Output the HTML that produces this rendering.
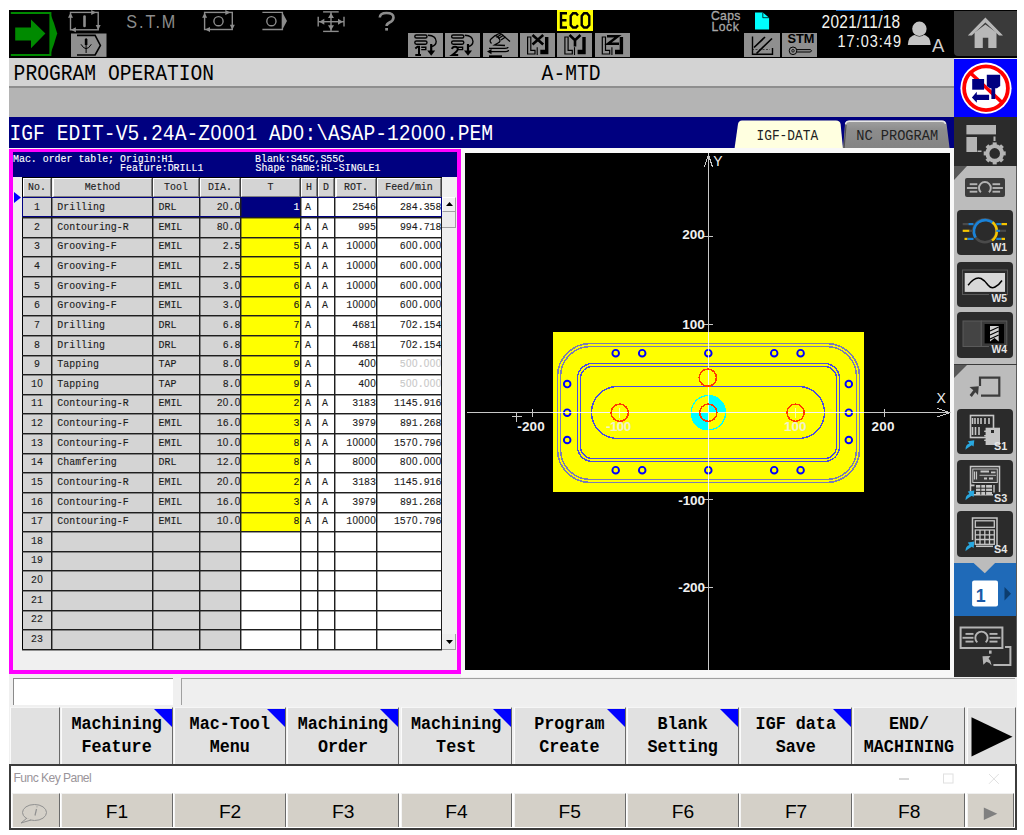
<!DOCTYPE html><html><head><meta charset="utf-8"><style>
*{margin:0;padding:0;box-sizing:border-box}
html,body{width:1024px;height:835px;overflow:hidden;background:#fff;position:relative;font-family:"Liberation Sans",sans-serif}
.ab{position:absolute}
.mono{font-family:"Liberation Mono",monospace}
.t{position:absolute;white-space:pre;line-height:1}
.z{font-family:"Liberation Sans",sans-serif;line-height:0}
.tb .t{-webkit-text-stroke:0.12px currentColor}
svg{position:absolute;overflow:visible}
</style></head><body>

<div class="ab" style="left:9px;top:10px;width:945px;height:48px;background:#000;"></div>
<div class="ab" style="left:9px;top:58px;width:945px;height:28px;background:#d3d3d3;"></div>
<div class="ab" style="left:9px;top:86px;width:945px;height:2px;background:#8e8e8e;"></div>
<div class="ab" style="left:9px;top:88px;width:945px;height:29px;background:#b4b4b4;"></div>
<div class="ab" style="left:9px;top:117px;width:945px;height:31px;background:#000080;"></div>
<div class="ab" style="left:9px;top:148px;width:945px;height:529px;background:#f0f0f0;"></div>
<div class="t mono" style="left:13.60px;top:65.07px;font-size:19.663px;color:#000;transform:scaleY(1.1041);transform-origin:0 0;">PROGRAM OPERATION</div>
<div class="t mono" style="left:541.60px;top:65.07px;font-size:19.663px;color:#000;transform:scaleY(1.1041);transform-origin:0 0;">A-MTD</div>
<div class="t mono" style="left:9.50px;top:124.22px;font-size:19.663px;color:#fff;transform:scaleY(1.1272);transform-origin:0 0;">IGF EDIT-V5.24A-Z<span class="z" style="letter-spacing:0.43px;margin-left:0.43px">0</span><span class="z" style="letter-spacing:0.43px;margin-left:0.43px">0</span><span class="z" style="letter-spacing:0.43px;margin-left:0.43px">0</span>1 AD<span class="z" style="letter-spacing:0.43px;margin-left:0.43px">0</span>:\ASAP-12<span class="z" style="letter-spacing:0.43px;margin-left:0.43px">0</span><span class="z" style="letter-spacing:0.43px;margin-left:0.43px">0</span><span class="z" style="letter-spacing:0.43px;margin-left:0.43px">0</span>.PEM</div>
<svg style="left:9px;top:10px;" width="52" height="48" viewBox="0 0 52 48"><path d="M1.8 3 H41.4 V45 H1.8" fill="none" stroke="#008a00" stroke-width="2"/><path d="M41 3 Q45 12 48.2 23.5 Q45 35 41 45 Z" fill="#008a00"/><path d="M6.2 17.6 H22 V9.5 L36.4 23.5 L22 38.2 V30.4 H6.2 Z" fill="#008a00"/></svg>
<svg style="left:0px;top:0px;" width="1024" height="60" viewBox="0 0 1024 60"><rect x="70.5" y="12.4" width="27.7" height="17.4" fill="none" stroke="#8c8c8c" stroke-width="1.4"/><path d="M91.2 9.9 L96.2 12.4 L91.2 14.9 Z" fill="#8c8c8c"/><path d="M68.0 17.7 L70.5 12.7 L73.0 17.7 Z" fill="#8c8c8c"/><path d="M95.7 25.0 L98.2 30.0 L100.7 25.0 Z" fill="#8c8c8c"/><path d="M75.9 27.3 L70.9 29.8 L75.9 32.3 Z" fill="#8c8c8c"/><line x1="84.5" y1="16.5" x2="84.5" y2="26" stroke="#8c8c8c" stroke-width="2.6" stroke-linecap="round"/><rect x="204.6" y="12.4" width="27.7" height="17.1" fill="none" stroke="#8c8c8c" stroke-width="1.4"/><path d="M225.3 9.9 L230.3 12.4 L225.3 14.9 Z" fill="#8c8c8c"/><path d="M202.1 17.7 L204.6 12.7 L207.1 17.7 Z" fill="#8c8c8c"/><path d="M229.8 24.7 L232.3 29.7 L234.8 24.7 Z" fill="#8c8c8c"/><path d="M210.0 27.0 L205.0 29.5 L210.0 32.0 Z" fill="#8c8c8c"/><circle cx="218.5" cy="21.2" r="4.6" fill="none" stroke="#8c8c8c" stroke-width="1.4"/><path d="M262.4 12.4 H282.4 V29.5 H262.4" fill="none" stroke="#8c8c8c" stroke-width="1.4"/><path d="M282 11.7 L287 21 L282 30.2 Z" fill="#8c8c8c"/><circle cx="271.4" cy="21.2" r="4.6" fill="none" stroke="#8c8c8c" stroke-width="1.4"/><g stroke="#8c8c8c" stroke-width="1.4" fill="none"><line x1="323.1" y1="11.9" x2="338.7" y2="11.9"/><line x1="323.1" y1="31.4" x2="338.7" y2="31.4"/><line x1="318.2" y1="16.8" x2="318.2" y2="26.6"/><line x1="344" y1="16.8" x2="344" y2="26.6"/><line x1="331" y1="12" x2="331" y2="31.3"/><line x1="318.3" y1="21.7" x2="344" y2="21.7"/></g><g fill="#8c8c8c"><path d="M331 13 L334 18 L328 18Z"/><path d="M331 30.3 L334 25.3 L328 25.3Z"/><path d="M319.3 21.7 L324.3 18.7 L324.3 24.7Z"/><path d="M343 21.7 L338 18.7 L338 24.7Z"/></g><path d="M379.8 17.5 Q380 13 386.5 13 Q393.5 13 393.5 17.5 Q393.5 20.5 389.5 22.5 Q386.6 24 386.6 26" fill="none" stroke="#8c8c8c" stroke-width="2.6"/><rect x="385.2" y="28" width="2.8" height="2.6" fill="#8c8c8c"/></svg>
<div class="t" style="left:126.30px;top:11.89px;font-size:16.200px;color:#8c8c8c;transform:scaleY(1.1700);transform-origin:0 0;letter-spacing:1.9px">S.T.M</div>
<svg style="left:71px;top:33px;" width="36" height="24" viewBox="0 0 36 24"><rect x="0" y="0.5" width="35.5" height="23.4" fill="#8f8f8f"/><path d="M6 2.4 H24.1 L29.4 12.4 L24.1 22 H6" fill="none" stroke="#000" stroke-width="1.6"/><line x1="15.1" y1="5" x2="15.1" y2="20" stroke="#000" stroke-width="1"/><rect x="13.8" y="6" width="2.6" height="6" fill="#000"/><path d="M10 11.3 Q15.1 20 20.3 11.3" fill="none" stroke="#000" stroke-width="1"/></svg>
<div class="ab" style="left:408px;top:33.4px;width:35px;height:23.6px;background:#8f8f8f;"></div>
<div class="ab" style="left:444.8px;top:33.4px;width:35.6px;height:23.6px;background:#8f8f8f;"></div>
<div class="ab" style="left:482.7px;top:33.4px;width:35px;height:23.6px;background:#8f8f8f;"></div>
<div class="ab" style="left:520px;top:33.4px;width:35px;height:23.6px;background:#8f8f8f;"></div>
<div class="ab" style="left:557.3px;top:33.4px;width:35px;height:23.6px;background:#8f8f8f;"></div>
<div class="ab" style="left:594.7px;top:33.4px;width:35px;height:23.6px;background:#8f8f8f;"></div>
<div class="ab" style="left:744.2px;top:33.4px;width:35.6px;height:23.6px;background:#8f8f8f;"></div>
<div class="ab" style="left:782.2px;top:33.4px;width:35px;height:23.6px;background:#8f8f8f;"></div>
<svg style="left:0px;top:0px;" width="1024" height="60" viewBox="0 0 1024 60"><g fill="none" stroke="#000" stroke-width="1.4"><rect x="414.8" y="35" width="12.2" height="3" rx="1.5"/><rect x="414.8" y="41" width="12.2" height="3.2" rx="1.6"/><path d="M428.0 35.3 Q436.0 35.6 436.2 41.5 Q436.0 45.5 431.5 46.5"/><path d="M421.2 47.3 H425.8 V49.6 H421.2"/></g><line x1="431.2" y1="44" x2="431.2" y2="52" stroke="#000" stroke-width="2.2"/><path d="M427.2 50.4 L431.2 55.8 L435.2 50.4Z" fill="#000"/><g fill="none" stroke="#000" stroke-width="1.4"><rect x="451.6" y="35" width="12.2" height="3" rx="1.5"/><rect x="451.6" y="41" width="12.2" height="3.2" rx="1.6"/><path d="M464.8 35.3 Q472.8 35.6 473.0 41.5 Q472.8 45.5 468.3 46.5"/><path d="M458.0 47.3 H462.6 V49.6 H458.0"/></g><line x1="468.0" y1="44" x2="468.0" y2="52" stroke="#000" stroke-width="2.2"/><path d="M464.0 50.4 L468.0 55.8 L472.0 50.4Z" fill="#000"/><path d="M415.3 48.5 L417.5 46.8 H419 V55.6 M415.3 55 H421" fill="none" stroke="#000" stroke-width="2"/><path d="M452 49 Q452.5 46.8 455 46.8 Q457.8 46.8 457.8 49 Q457.8 51 452.3 55 H458.2" fill="none" stroke="#000" stroke-width="2"/></svg>
<svg style="left:0px;top:0px;" width="1024" height="60" viewBox="0 0 1024 60"><g fill="none" stroke="#000" stroke-width="1.3"><path d="M491.5 43.5 Q489 41 491 39 L494.5 36 Q496 35 497.5 36.5 L499.5 39 Q501 41.5 498 43 L494.5 45 L505 45.5"/><path d="M494.5 36 L498.5 33.8 Q500.5 33.2 502 34.5 L510 41.5"/><path d="M496.5 37.5 L501 34.5 M498.5 38.5 L503.5 35.2 M501 40 L505.5 37"/><path d="M489 48.3 H505 Q508 48.3 508 47"/><path d="M490 51.6 H505.5 Q508.5 51.6 508.5 50"/></g><path d="M487 51.6 L491.5 49 V54.2Z" fill="#000"/><rect x="489" y="55.3" width="13" height="1.7" fill="#000"/></svg>
<svg style="left:0px;top:0px;" width="1024" height="60" viewBox="0 0 1024 60"><path d="M527.6 37 H530.8 V50.3 H535.0 V54 H527.6 Z" fill="none" stroke="#000" stroke-width="1.2"/><line x1="537.2" y1="47.2" x2="537.2" y2="55" stroke="#000" stroke-width="1.1"/><path d="M548.4 37 V54.2 H540.3 V49.8 H545.0 V37Z" fill="#000"/><path d="M564.9 37 H568.1 V50.3 H572.3 V54 H564.9 Z" fill="none" stroke="#000" stroke-width="1.2"/><line x1="574.5" y1="47.2" x2="574.5" y2="55" stroke="#000" stroke-width="1.1"/><path d="M585.7 37 V54.2 H577.6 V49.8 H582.3 V37Z" fill="#000"/><path d="M602.3 37 H605.5 V50.3 H609.7 V54 H602.3 Z" fill="none" stroke="#000" stroke-width="1.2"/><line x1="611.9" y1="47.2" x2="611.9" y2="55" stroke="#000" stroke-width="1.1"/><path d="M623.1 37 V54.2 H615.0 V49.8 H619.7 V37Z" fill="#000"/><path d="M532.5 35 L543.2 44.5 M543.2 35 L532.5 44.5" stroke="#000" stroke-width="2.6"/><path d="M569.5 35 L575 40.2 L580.5 35 M575 40.2 V46.5" fill="none" stroke="#000" stroke-width="2.6"/><path d="M607 36.3 H618 L608 43.7 H619" fill="none" stroke="#000" stroke-width="2.4"/></svg>
<div class="ab" style="left:557.3px;top:10px;width:35.7px;height:21px;background:#ffff00;"></div>
<svg style="left:0px;top:0px;" width="1024" height="60" viewBox="0 0 1024 60"><g fill="none" stroke="#000" stroke-width="2.4"><path d="M567 13.3 H561 V27.5 H567 M561 20.3 H566.5"/><path d="M578 15.5 L576 13.3 H573 L570.7 16 V25 L573 27.5 H576 L578 25.3"/><path d="M584 13.3 H587 L589.3 16 V25 L587 27.5 H584 L581.7 25 V16 Z"/></g></svg>
<div class="t" style="left:711.00px;top:9.56px;font-size:12.200px;color:#a8a8a8;letter-spacing:0.3px;-webkit-text-stroke:0.3px #a8a8a8">Caps</div>
<div class="t" style="left:711.50px;top:21.36px;font-size:12.200px;color:#a8a8a8;letter-spacing:0.5px;-webkit-text-stroke:0.3px #a8a8a8">Lock</div>
<svg style="left:0px;top:0px;" width="1024" height="60" viewBox="0 0 1024 60"><path d="M755 12.6 H762.8 L769.1 17.7 V29.6 H755Z" fill="#00ffff"/><path d="M762.8 12.6 V17.7 H769.1" fill="none" stroke="#000" stroke-width="0.8"/></svg>
<svg style="left:0px;top:0px;" width="1024" height="60" viewBox="0 0 1024 60"><path d="M752.5 36.5 V54.3 H772.5 V48" fill="none" stroke="#000" stroke-width="1.4"/><path d="M754 47.5 L765 37 M756.5 53.5 L772 38.5" stroke="#000" stroke-width="1.7"/><path d="M752 49.5 H770" stroke="#000" stroke-width="0.6" stroke-dasharray="2 1.5"/></svg>
<div class="t" style="left:787.40px;top:32.97px;font-size:12.800px;color:#000;font-weight:bold;">STM</div>
<svg style="left:0px;top:0px;" width="1024" height="60" viewBox="0 0 1024 60"><circle cx="793" cy="50.8" r="3.8" fill="none" stroke="#000" stroke-width="1"/><circle cx="793" cy="50.8" r="1.3" fill="none" stroke="#000" stroke-width="0.8"/><path d="M796.8 49.6 H810.5 M796.8 52 H810.5 L811.5 50.8 L810.5 49.6" fill="none" stroke="#000" stroke-width="1"/></svg>
<div class="t" style="left:821.60px;top:13.36px;font-size:15.400px;color:#f4f4f0;transform:scaleY(1.1600);transform-origin:0 0;letter-spacing:0.3px">2021/11/18</div>
<div class="t" style="left:837.50px;top:33.28px;font-size:14.500px;color:#f4f4f0;transform:scaleY(1.1400);transform-origin:0 0;letter-spacing:1.0px">17:03:49</div>
<div class="ab" style="left:836px;top:9.5px;width:47px;height:1.2px;background:#1e6ec8;"></div>
<svg style="left:0px;top:0px;" width="1024" height="60" viewBox="0 0 1024 60"><path d="M907.8 44.9 Q908.3 35.2 916.5 34.4 H922.3 Q930.3 35.2 930.7 44.9Z" fill="#c4c4c4"/><circle cx="919.4" cy="28.8" r="7.6" fill="#000"/><circle cx="919.4" cy="28.8" r="7.2" fill="#c4c4c4"/></svg>
<div class="t" style="left:931.90px;top:36.66px;font-size:18.500px;color:#d0d0d0;">A</div>
<svg style="left:0px;top:0px;" width="1024" height="160" viewBox="0 0 1024 160"><path d="M734.5 148.7 L738 124 Q738.7 120.5 742 120.5 H836 Q840 120.5 840.6 124 L843 148.7Z" fill="#ffffe0"/><defs><linearGradient id="ncg" x1="0" y1="0" x2="0" y2="1"><stop offset="0" stop-color="#a0a0a0"/><stop offset="0.35" stop-color="#8c8c8c"/><stop offset="1" stop-color="#848484"/></linearGradient></defs><path d="M843 148.7 L845 124.5 Q845.6 120.5 849.5 120.5 H942 Q946 120.5 946.6 124.5 L949.7 148.7Z" fill="url(#ncg)"/><path d="M844 148.7 L846 125" fill="none" stroke="#505050" stroke-width="1.2"/><path d="M845.5 124 Q846 121.2 849.5 121.2 H942 Q945 121.2 945.5 124" fill="none" stroke="#e8e8e8" stroke-width="1.4"/></svg>
<div class="t mono" style="left:756.50px;top:128.67px;font-size:12.831px;color:#222;transform:scaleY(1.1832);transform-origin:0 0;">IGF-DATA</div>
<div class="t mono" style="left:856.20px;top:128.97px;font-size:13.664px;color:#222;transform:scaleY(1.1110);transform-origin:0 0;">NC PROGRAM</div>
<div class="tb">
<div class="ab" style="left:9px;top:149px;width:452px;height:525px;border:4px solid #ff00ff;background:#f0f0f0"></div>
<div class="ab" style="left:13px;top:152px;width:444px;height:25px;background:#000080;"></div>
<div class="t mono" style="left:13.00px;top:153.66px;font-size:9.915px;color:#fff;transform:scaleY(1.0718);transform-origin:0 0;">Mac. order table; Origin:H1</div>
<div class="t mono" style="left:120.10px;top:163.46px;font-size:9.915px;color:#fff;transform:scaleY(1.0718);transform-origin:0 0;">Feature:DRILL1</div>
<div class="t mono" style="left:255.00px;top:153.86px;font-size:9.915px;color:#fff;transform:scaleY(1.0718);transform-origin:0 0;">Blank:S45C,S55C</div>
<div class="t mono" style="left:255.60px;top:163.06px;font-size:9.915px;color:#fff;transform:scaleY(1.0718);transform-origin:0 0;">Shape name:HL-SINGLE1</div>
<div class="ab" style="left:22px;top:177px;width:420px;height:1px;background:#000;"></div>
<div class="ab" style="left:22px;top:177px;width:1px;height:473px;background:#000;"></div>
<div class="ab" style="left:23px;top:178px;width:28px;height:19px;background:#d4d4d4;border-top:1px solid #fff;border-left:1px solid #fff;border-right:1px solid #808080;border-bottom:1px solid #808080"></div>
<div class="t mono" style="left:28.07px;top:182.06px;font-size:9.915px;color:#222;transform:scaleY(1.0718);transform-origin:0 0;">No.</div>
<div class="ab" style="left:53px;top:178px;width:99px;height:19px;background:#d4d4d4;border-top:1px solid #fff;border-left:1px solid #fff;border-right:1px solid #808080;border-bottom:1px solid #808080"></div>
<div class="t mono" style="left:84.65px;top:182.06px;font-size:9.915px;color:#222;transform:scaleY(1.0718);transform-origin:0 0;">Method</div>
<div class="ab" style="left:153px;top:178px;width:46px;height:19px;background:#d4d4d4;border-top:1px solid #fff;border-left:1px solid #fff;border-right:1px solid #808080;border-bottom:1px solid #808080"></div>
<div class="t mono" style="left:164.10px;top:182.06px;font-size:9.915px;color:#222;transform:scaleY(1.0718);transform-origin:0 0;">Tool</div>
<div class="ab" style="left:200px;top:178px;width:40px;height:19px;background:#d4d4d4;border-top:1px solid #fff;border-left:1px solid #fff;border-right:1px solid #808080;border-bottom:1px solid #808080"></div>
<div class="t mono" style="left:208.10px;top:182.06px;font-size:9.915px;color:#222;transform:scaleY(1.0718);transform-origin:0 0;">DIA.</div>
<div class="ab" style="left:241px;top:178px;width:59px;height:19px;background:#d4d4d4;border-top:1px solid #fff;border-left:1px solid #fff;border-right:1px solid #808080;border-bottom:1px solid #808080"></div>
<div class="t mono" style="left:267.52px;top:182.06px;font-size:9.915px;color:#222;transform:scaleY(1.0718);transform-origin:0 0;">T</div>
<div class="ab" style="left:301px;top:178px;width:16px;height:19px;background:#d4d4d4;border-top:1px solid #fff;border-left:1px solid #fff;border-right:1px solid #808080;border-bottom:1px solid #808080"></div>
<div class="t mono" style="left:306.02px;top:182.06px;font-size:9.915px;color:#222;transform:scaleY(1.0718);transform-origin:0 0;">H</div>
<div class="ab" style="left:318px;top:178px;width:16px;height:19px;background:#d4d4d4;border-top:1px solid #fff;border-left:1px solid #fff;border-right:1px solid #808080;border-bottom:1px solid #808080"></div>
<div class="t mono" style="left:323.02px;top:182.06px;font-size:9.915px;color:#222;transform:scaleY(1.0718);transform-origin:0 0;">D</div>
<div class="ab" style="left:336px;top:178px;width:40px;height:19px;background:#d4d4d4;border-top:1px solid #fff;border-left:1px solid #fff;border-right:1px solid #808080;border-bottom:1px solid #808080"></div>
<div class="t mono" style="left:344.10px;top:182.06px;font-size:9.915px;color:#222;transform:scaleY(1.0718);transform-origin:0 0;">ROT.</div>
<div class="ab" style="left:377px;top:178px;width:64px;height:19px;background:#d4d4d4;border-top:1px solid #fff;border-left:1px solid #fff;border-right:1px solid #808080;border-bottom:1px solid #808080"></div>
<div class="t mono" style="left:385.20px;top:182.06px;font-size:9.915px;color:#222;transform:scaleY(1.0718);transform-origin:0 0;">Feed/min</div>
<div class="ab" style="left:51px;top:178px;width:1px;height:19px;background:#404040;"></div>
<div class="ab" style="left:152px;top:178px;width:1px;height:19px;background:#404040;"></div>
<div class="ab" style="left:199px;top:178px;width:1px;height:19px;background:#404040;"></div>
<div class="ab" style="left:240px;top:178px;width:1px;height:19px;background:#404040;"></div>
<div class="ab" style="left:300px;top:178px;width:1px;height:19px;background:#404040;"></div>
<div class="ab" style="left:317px;top:178px;width:1px;height:19px;background:#404040;"></div>
<div class="ab" style="left:334px;top:178px;width:1px;height:19px;background:#404040;"></div>
<div class="ab" style="left:376px;top:178px;width:1px;height:19px;background:#404040;"></div>
<div class="ab" style="left:441px;top:178px;width:1px;height:19px;background:#404040;"></div>
<div class="ab" style="left:23px;top:198px;width:218px;height:19px;background:#d4d4d4;"></div>
<div class="ab" style="left:241px;top:198px;width:200px;height:19px;background:#fff;"></div>
<div class="ab" style="left:241px;top:198px;width:59px;height:19px;background:#000080;"></div>
<div class="t mono" style="left:34.02px;top:202.13px;font-size:9.915px;color:#1c1c1c;transform:scaleY(1.1024);transform-origin:0 0;">1</div>
<div class="t mono" style="left:57.30px;top:202.13px;font-size:9.915px;color:#1c1c1c;transform:scaleY(1.1024);transform-origin:0 0;">Drilling</div>
<div class="t mono" style="left:158.50px;top:202.13px;font-size:9.915px;color:#1c1c1c;transform:scaleY(1.1024);transform-origin:0 0;">DRL</div>
<div class="t mono" style="right:783.50px;top:202.13px;font-size:9.915px;color:#1c1c1c;transform:scaleY(1.1024);transform-origin:0 0;">2<span class="z" style="letter-spacing:0.22px;margin-left:0.22px">0</span>.<span class="z" style="letter-spacing:0.22px;margin-left:0.22px">0</span></div>
<div class="t mono" style="right:724.50px;top:202.13px;font-size:9.915px;color:#fff;transform:scaleY(1.1024);transform-origin:0 0;">1</div>
<div class="t mono" style="left:305.00px;top:202.13px;font-size:9.915px;color:#1c1c1c;transform:scaleY(1.1024);transform-origin:0 0;">A</div>
<div class="t mono" style="right:648.00px;top:202.13px;font-size:9.915px;color:#1c1c1c;transform:scaleY(1.1024);transform-origin:0 0;">2546</div>
<div class="t mono" style="right:582.50px;top:202.13px;font-size:9.915px;color:#1c1c1c;transform:scaleY(1.1024);transform-origin:0 0;">284.358</div>
<div class="ab" style="left:23px;top:217px;width:218px;height:20px;background:#d4d4d4;"></div>
<div class="ab" style="left:241px;top:217px;width:200px;height:20px;background:#fff;"></div>
<div class="ab" style="left:241px;top:217px;width:59px;height:20px;background:#ffff00;"></div>
<div class="t mono" style="left:34.02px;top:221.76px;font-size:9.915px;color:#1c1c1c;transform:scaleY(1.1024);transform-origin:0 0;">2</div>
<div class="t mono" style="left:57.30px;top:221.76px;font-size:9.915px;color:#1c1c1c;transform:scaleY(1.1024);transform-origin:0 0;">Contouring-R</div>
<div class="t mono" style="left:158.50px;top:221.76px;font-size:9.915px;color:#1c1c1c;transform:scaleY(1.1024);transform-origin:0 0;">EMIL</div>
<div class="t mono" style="right:783.50px;top:221.76px;font-size:9.915px;color:#1c1c1c;transform:scaleY(1.1024);transform-origin:0 0;">8<span class="z" style="letter-spacing:0.22px;margin-left:0.22px">0</span>.<span class="z" style="letter-spacing:0.22px;margin-left:0.22px">0</span></div>
<div class="t mono" style="right:724.50px;top:221.76px;font-size:9.915px;color:#1c1c1c;transform:scaleY(1.1024);transform-origin:0 0;">4</div>
<div class="t mono" style="left:305.00px;top:221.76px;font-size:9.915px;color:#1c1c1c;transform:scaleY(1.1024);transform-origin:0 0;">A</div>
<div class="t mono" style="left:322.00px;top:221.76px;font-size:9.915px;color:#1c1c1c;transform:scaleY(1.1024);transform-origin:0 0;">A</div>
<div class="t mono" style="right:648.00px;top:221.76px;font-size:9.915px;color:#1c1c1c;transform:scaleY(1.1024);transform-origin:0 0;">995</div>
<div class="t mono" style="right:582.50px;top:221.76px;font-size:9.915px;color:#1c1c1c;transform:scaleY(1.1024);transform-origin:0 0;">994.718</div>
<div class="ab" style="left:23px;top:237px;width:218px;height:19px;background:#d4d4d4;"></div>
<div class="ab" style="left:241px;top:237px;width:200px;height:19px;background:#fff;"></div>
<div class="ab" style="left:241px;top:237px;width:59px;height:19px;background:#ffff00;"></div>
<div class="t mono" style="left:34.02px;top:241.39px;font-size:9.915px;color:#1c1c1c;transform:scaleY(1.1024);transform-origin:0 0;">3</div>
<div class="t mono" style="left:57.30px;top:241.39px;font-size:9.915px;color:#1c1c1c;transform:scaleY(1.1024);transform-origin:0 0;">Grooving-F</div>
<div class="t mono" style="left:158.50px;top:241.39px;font-size:9.915px;color:#1c1c1c;transform:scaleY(1.1024);transform-origin:0 0;">EMIL</div>
<div class="t mono" style="right:783.50px;top:241.39px;font-size:9.915px;color:#1c1c1c;transform:scaleY(1.1024);transform-origin:0 0;">2.5</div>
<div class="t mono" style="right:724.50px;top:241.39px;font-size:9.915px;color:#1c1c1c;transform:scaleY(1.1024);transform-origin:0 0;">5</div>
<div class="t mono" style="left:305.00px;top:241.39px;font-size:9.915px;color:#1c1c1c;transform:scaleY(1.1024);transform-origin:0 0;">A</div>
<div class="t mono" style="left:322.00px;top:241.39px;font-size:9.915px;color:#1c1c1c;transform:scaleY(1.1024);transform-origin:0 0;">A</div>
<div class="t mono" style="right:648.00px;top:241.39px;font-size:9.915px;color:#1c1c1c;transform:scaleY(1.1024);transform-origin:0 0;">1<span class="z" style="letter-spacing:0.22px;margin-left:0.22px">0</span><span class="z" style="letter-spacing:0.22px;margin-left:0.22px">0</span><span class="z" style="letter-spacing:0.22px;margin-left:0.22px">0</span><span class="z" style="letter-spacing:0.22px;margin-left:0.22px">0</span></div>
<div class="t mono" style="right:582.50px;top:241.39px;font-size:9.915px;color:#1c1c1c;transform:scaleY(1.1024);transform-origin:0 0;">6<span class="z" style="letter-spacing:0.22px;margin-left:0.22px">0</span><span class="z" style="letter-spacing:0.22px;margin-left:0.22px">0</span>.<span class="z" style="letter-spacing:0.22px;margin-left:0.22px">0</span><span class="z" style="letter-spacing:0.22px;margin-left:0.22px">0</span><span class="z" style="letter-spacing:0.22px;margin-left:0.22px">0</span></div>
<div class="ab" style="left:23px;top:256px;width:218px;height:20px;background:#d4d4d4;"></div>
<div class="ab" style="left:241px;top:256px;width:200px;height:20px;background:#fff;"></div>
<div class="ab" style="left:241px;top:256px;width:59px;height:20px;background:#ffff00;"></div>
<div class="t mono" style="left:34.02px;top:261.02px;font-size:9.915px;color:#1c1c1c;transform:scaleY(1.1024);transform-origin:0 0;">4</div>
<div class="t mono" style="left:57.30px;top:261.02px;font-size:9.915px;color:#1c1c1c;transform:scaleY(1.1024);transform-origin:0 0;">Grooving-F</div>
<div class="t mono" style="left:158.50px;top:261.02px;font-size:9.915px;color:#1c1c1c;transform:scaleY(1.1024);transform-origin:0 0;">EMIL</div>
<div class="t mono" style="right:783.50px;top:261.02px;font-size:9.915px;color:#1c1c1c;transform:scaleY(1.1024);transform-origin:0 0;">2.5</div>
<div class="t mono" style="right:724.50px;top:261.02px;font-size:9.915px;color:#1c1c1c;transform:scaleY(1.1024);transform-origin:0 0;">5</div>
<div class="t mono" style="left:305.00px;top:261.02px;font-size:9.915px;color:#1c1c1c;transform:scaleY(1.1024);transform-origin:0 0;">A</div>
<div class="t mono" style="left:322.00px;top:261.02px;font-size:9.915px;color:#1c1c1c;transform:scaleY(1.1024);transform-origin:0 0;">A</div>
<div class="t mono" style="right:648.00px;top:261.02px;font-size:9.915px;color:#1c1c1c;transform:scaleY(1.1024);transform-origin:0 0;">1<span class="z" style="letter-spacing:0.22px;margin-left:0.22px">0</span><span class="z" style="letter-spacing:0.22px;margin-left:0.22px">0</span><span class="z" style="letter-spacing:0.22px;margin-left:0.22px">0</span><span class="z" style="letter-spacing:0.22px;margin-left:0.22px">0</span></div>
<div class="t mono" style="right:582.50px;top:261.02px;font-size:9.915px;color:#1c1c1c;transform:scaleY(1.1024);transform-origin:0 0;">6<span class="z" style="letter-spacing:0.22px;margin-left:0.22px">0</span><span class="z" style="letter-spacing:0.22px;margin-left:0.22px">0</span>.<span class="z" style="letter-spacing:0.22px;margin-left:0.22px">0</span><span class="z" style="letter-spacing:0.22px;margin-left:0.22px">0</span><span class="z" style="letter-spacing:0.22px;margin-left:0.22px">0</span></div>
<div class="ab" style="left:23px;top:276px;width:218px;height:20px;background:#d4d4d4;"></div>
<div class="ab" style="left:241px;top:276px;width:200px;height:20px;background:#fff;"></div>
<div class="ab" style="left:241px;top:276px;width:59px;height:20px;background:#ffff00;"></div>
<div class="t mono" style="left:34.02px;top:280.65px;font-size:9.915px;color:#1c1c1c;transform:scaleY(1.1024);transform-origin:0 0;">5</div>
<div class="t mono" style="left:57.30px;top:280.65px;font-size:9.915px;color:#1c1c1c;transform:scaleY(1.1024);transform-origin:0 0;">Grooving-F</div>
<div class="t mono" style="left:158.50px;top:280.65px;font-size:9.915px;color:#1c1c1c;transform:scaleY(1.1024);transform-origin:0 0;">EMIL</div>
<div class="t mono" style="right:783.50px;top:280.65px;font-size:9.915px;color:#1c1c1c;transform:scaleY(1.1024);transform-origin:0 0;">3.<span class="z" style="letter-spacing:0.22px;margin-left:0.22px">0</span></div>
<div class="t mono" style="right:724.50px;top:280.65px;font-size:9.915px;color:#1c1c1c;transform:scaleY(1.1024);transform-origin:0 0;">6</div>
<div class="t mono" style="left:305.00px;top:280.65px;font-size:9.915px;color:#1c1c1c;transform:scaleY(1.1024);transform-origin:0 0;">A</div>
<div class="t mono" style="left:322.00px;top:280.65px;font-size:9.915px;color:#1c1c1c;transform:scaleY(1.1024);transform-origin:0 0;">A</div>
<div class="t mono" style="right:648.00px;top:280.65px;font-size:9.915px;color:#1c1c1c;transform:scaleY(1.1024);transform-origin:0 0;">1<span class="z" style="letter-spacing:0.22px;margin-left:0.22px">0</span><span class="z" style="letter-spacing:0.22px;margin-left:0.22px">0</span><span class="z" style="letter-spacing:0.22px;margin-left:0.22px">0</span><span class="z" style="letter-spacing:0.22px;margin-left:0.22px">0</span></div>
<div class="t mono" style="right:582.50px;top:280.65px;font-size:9.915px;color:#1c1c1c;transform:scaleY(1.1024);transform-origin:0 0;">6<span class="z" style="letter-spacing:0.22px;margin-left:0.22px">0</span><span class="z" style="letter-spacing:0.22px;margin-left:0.22px">0</span>.<span class="z" style="letter-spacing:0.22px;margin-left:0.22px">0</span><span class="z" style="letter-spacing:0.22px;margin-left:0.22px">0</span><span class="z" style="letter-spacing:0.22px;margin-left:0.22px">0</span></div>
<div class="ab" style="left:23px;top:296px;width:218px;height:19px;background:#d4d4d4;"></div>
<div class="ab" style="left:241px;top:296px;width:200px;height:19px;background:#fff;"></div>
<div class="ab" style="left:241px;top:296px;width:59px;height:19px;background:#ffff00;"></div>
<div class="t mono" style="left:34.02px;top:300.28px;font-size:9.915px;color:#1c1c1c;transform:scaleY(1.1024);transform-origin:0 0;">6</div>
<div class="t mono" style="left:57.30px;top:300.28px;font-size:9.915px;color:#1c1c1c;transform:scaleY(1.1024);transform-origin:0 0;">Grooving-F</div>
<div class="t mono" style="left:158.50px;top:300.28px;font-size:9.915px;color:#1c1c1c;transform:scaleY(1.1024);transform-origin:0 0;">EMIL</div>
<div class="t mono" style="right:783.50px;top:300.28px;font-size:9.915px;color:#1c1c1c;transform:scaleY(1.1024);transform-origin:0 0;">3.<span class="z" style="letter-spacing:0.22px;margin-left:0.22px">0</span></div>
<div class="t mono" style="right:724.50px;top:300.28px;font-size:9.915px;color:#1c1c1c;transform:scaleY(1.1024);transform-origin:0 0;">6</div>
<div class="t mono" style="left:305.00px;top:300.28px;font-size:9.915px;color:#1c1c1c;transform:scaleY(1.1024);transform-origin:0 0;">A</div>
<div class="t mono" style="left:322.00px;top:300.28px;font-size:9.915px;color:#1c1c1c;transform:scaleY(1.1024);transform-origin:0 0;">A</div>
<div class="t mono" style="right:648.00px;top:300.28px;font-size:9.915px;color:#1c1c1c;transform:scaleY(1.1024);transform-origin:0 0;">1<span class="z" style="letter-spacing:0.22px;margin-left:0.22px">0</span><span class="z" style="letter-spacing:0.22px;margin-left:0.22px">0</span><span class="z" style="letter-spacing:0.22px;margin-left:0.22px">0</span><span class="z" style="letter-spacing:0.22px;margin-left:0.22px">0</span></div>
<div class="t mono" style="right:582.50px;top:300.28px;font-size:9.915px;color:#1c1c1c;transform:scaleY(1.1024);transform-origin:0 0;">6<span class="z" style="letter-spacing:0.22px;margin-left:0.22px">0</span><span class="z" style="letter-spacing:0.22px;margin-left:0.22px">0</span>.<span class="z" style="letter-spacing:0.22px;margin-left:0.22px">0</span><span class="z" style="letter-spacing:0.22px;margin-left:0.22px">0</span><span class="z" style="letter-spacing:0.22px;margin-left:0.22px">0</span></div>
<div class="ab" style="left:23px;top:315px;width:218px;height:20px;background:#d4d4d4;"></div>
<div class="ab" style="left:241px;top:315px;width:200px;height:20px;background:#fff;"></div>
<div class="ab" style="left:241px;top:315px;width:59px;height:20px;background:#ffff00;"></div>
<div class="t mono" style="left:34.02px;top:319.91px;font-size:9.915px;color:#1c1c1c;transform:scaleY(1.1024);transform-origin:0 0;">7</div>
<div class="t mono" style="left:57.30px;top:319.91px;font-size:9.915px;color:#1c1c1c;transform:scaleY(1.1024);transform-origin:0 0;">Drilling</div>
<div class="t mono" style="left:158.50px;top:319.91px;font-size:9.915px;color:#1c1c1c;transform:scaleY(1.1024);transform-origin:0 0;">DRL</div>
<div class="t mono" style="right:783.50px;top:319.91px;font-size:9.915px;color:#1c1c1c;transform:scaleY(1.1024);transform-origin:0 0;">6.8</div>
<div class="t mono" style="right:724.50px;top:319.91px;font-size:9.915px;color:#1c1c1c;transform:scaleY(1.1024);transform-origin:0 0;">7</div>
<div class="t mono" style="left:305.00px;top:319.91px;font-size:9.915px;color:#1c1c1c;transform:scaleY(1.1024);transform-origin:0 0;">A</div>
<div class="t mono" style="right:648.00px;top:319.91px;font-size:9.915px;color:#1c1c1c;transform:scaleY(1.1024);transform-origin:0 0;">4681</div>
<div class="t mono" style="right:582.50px;top:319.91px;font-size:9.915px;color:#1c1c1c;transform:scaleY(1.1024);transform-origin:0 0;">7<span class="z" style="letter-spacing:0.22px;margin-left:0.22px">0</span>2.154</div>
<div class="ab" style="left:23px;top:335px;width:218px;height:20px;background:#d4d4d4;"></div>
<div class="ab" style="left:241px;top:335px;width:200px;height:20px;background:#fff;"></div>
<div class="ab" style="left:241px;top:335px;width:59px;height:20px;background:#ffff00;"></div>
<div class="t mono" style="left:34.02px;top:339.54px;font-size:9.915px;color:#1c1c1c;transform:scaleY(1.1024);transform-origin:0 0;">8</div>
<div class="t mono" style="left:57.30px;top:339.54px;font-size:9.915px;color:#1c1c1c;transform:scaleY(1.1024);transform-origin:0 0;">Drilling</div>
<div class="t mono" style="left:158.50px;top:339.54px;font-size:9.915px;color:#1c1c1c;transform:scaleY(1.1024);transform-origin:0 0;">DRL</div>
<div class="t mono" style="right:783.50px;top:339.54px;font-size:9.915px;color:#1c1c1c;transform:scaleY(1.1024);transform-origin:0 0;">6.8</div>
<div class="t mono" style="right:724.50px;top:339.54px;font-size:9.915px;color:#1c1c1c;transform:scaleY(1.1024);transform-origin:0 0;">7</div>
<div class="t mono" style="left:305.00px;top:339.54px;font-size:9.915px;color:#1c1c1c;transform:scaleY(1.1024);transform-origin:0 0;">A</div>
<div class="t mono" style="right:648.00px;top:339.54px;font-size:9.915px;color:#1c1c1c;transform:scaleY(1.1024);transform-origin:0 0;">4681</div>
<div class="t mono" style="right:582.50px;top:339.54px;font-size:9.915px;color:#1c1c1c;transform:scaleY(1.1024);transform-origin:0 0;">7<span class="z" style="letter-spacing:0.22px;margin-left:0.22px">0</span>2.154</div>
<div class="ab" style="left:23px;top:355px;width:218px;height:19px;background:#d4d4d4;"></div>
<div class="ab" style="left:241px;top:355px;width:200px;height:19px;background:#fff;"></div>
<div class="ab" style="left:241px;top:355px;width:59px;height:19px;background:#ffff00;"></div>
<div class="t mono" style="left:34.02px;top:359.17px;font-size:9.915px;color:#1c1c1c;transform:scaleY(1.1024);transform-origin:0 0;">9</div>
<div class="t mono" style="left:57.30px;top:359.17px;font-size:9.915px;color:#1c1c1c;transform:scaleY(1.1024);transform-origin:0 0;">Tapping</div>
<div class="t mono" style="left:158.50px;top:359.17px;font-size:9.915px;color:#1c1c1c;transform:scaleY(1.1024);transform-origin:0 0;">TAP</div>
<div class="t mono" style="right:783.50px;top:359.17px;font-size:9.915px;color:#1c1c1c;transform:scaleY(1.1024);transform-origin:0 0;">8.<span class="z" style="letter-spacing:0.22px;margin-left:0.22px">0</span></div>
<div class="t mono" style="right:724.50px;top:359.17px;font-size:9.915px;color:#1c1c1c;transform:scaleY(1.1024);transform-origin:0 0;">9</div>
<div class="t mono" style="left:305.00px;top:359.17px;font-size:9.915px;color:#1c1c1c;transform:scaleY(1.1024);transform-origin:0 0;">A</div>
<div class="t mono" style="right:648.00px;top:359.17px;font-size:9.915px;color:#1c1c1c;transform:scaleY(1.1024);transform-origin:0 0;">4<span class="z" style="letter-spacing:0.22px;margin-left:0.22px">0</span><span class="z" style="letter-spacing:0.22px;margin-left:0.22px">0</span></div>
<div class="t mono" style="right:582.50px;top:359.17px;font-size:9.915px;color:#c8c8c8;transform:scaleY(1.1024);transform-origin:0 0;">5<span class="z" style="letter-spacing:0.22px;margin-left:0.22px">0</span><span class="z" style="letter-spacing:0.22px;margin-left:0.22px">0</span>.<span class="z" style="letter-spacing:0.22px;margin-left:0.22px">0</span><span class="z" style="letter-spacing:0.22px;margin-left:0.22px">0</span><span class="z" style="letter-spacing:0.22px;margin-left:0.22px">0</span></div>
<div class="ab" style="left:23px;top:374px;width:218px;height:20px;background:#d4d4d4;"></div>
<div class="ab" style="left:241px;top:374px;width:200px;height:20px;background:#fff;"></div>
<div class="ab" style="left:241px;top:374px;width:59px;height:20px;background:#ffff00;"></div>
<div class="t mono" style="left:31.05px;top:378.80px;font-size:9.915px;color:#1c1c1c;transform:scaleY(1.1024);transform-origin:0 0;">1<span class="z" style="letter-spacing:0.22px;margin-left:0.22px">0</span></div>
<div class="t mono" style="left:57.30px;top:378.80px;font-size:9.915px;color:#1c1c1c;transform:scaleY(1.1024);transform-origin:0 0;">Tapping</div>
<div class="t mono" style="left:158.50px;top:378.80px;font-size:9.915px;color:#1c1c1c;transform:scaleY(1.1024);transform-origin:0 0;">TAP</div>
<div class="t mono" style="right:783.50px;top:378.80px;font-size:9.915px;color:#1c1c1c;transform:scaleY(1.1024);transform-origin:0 0;">8.<span class="z" style="letter-spacing:0.22px;margin-left:0.22px">0</span></div>
<div class="t mono" style="right:724.50px;top:378.80px;font-size:9.915px;color:#1c1c1c;transform:scaleY(1.1024);transform-origin:0 0;">9</div>
<div class="t mono" style="left:305.00px;top:378.80px;font-size:9.915px;color:#1c1c1c;transform:scaleY(1.1024);transform-origin:0 0;">A</div>
<div class="t mono" style="right:648.00px;top:378.80px;font-size:9.915px;color:#1c1c1c;transform:scaleY(1.1024);transform-origin:0 0;">4<span class="z" style="letter-spacing:0.22px;margin-left:0.22px">0</span><span class="z" style="letter-spacing:0.22px;margin-left:0.22px">0</span></div>
<div class="t mono" style="right:582.50px;top:378.80px;font-size:9.915px;color:#c8c8c8;transform:scaleY(1.1024);transform-origin:0 0;">5<span class="z" style="letter-spacing:0.22px;margin-left:0.22px">0</span><span class="z" style="letter-spacing:0.22px;margin-left:0.22px">0</span>.<span class="z" style="letter-spacing:0.22px;margin-left:0.22px">0</span><span class="z" style="letter-spacing:0.22px;margin-left:0.22px">0</span><span class="z" style="letter-spacing:0.22px;margin-left:0.22px">0</span></div>
<div class="ab" style="left:23px;top:394px;width:218px;height:19px;background:#d4d4d4;"></div>
<div class="ab" style="left:241px;top:394px;width:200px;height:19px;background:#fff;"></div>
<div class="ab" style="left:241px;top:394px;width:59px;height:19px;background:#ffff00;"></div>
<div class="t mono" style="left:31.05px;top:398.43px;font-size:9.915px;color:#1c1c1c;transform:scaleY(1.1024);transform-origin:0 0;">11</div>
<div class="t mono" style="left:57.30px;top:398.43px;font-size:9.915px;color:#1c1c1c;transform:scaleY(1.1024);transform-origin:0 0;">Contouring-R</div>
<div class="t mono" style="left:158.50px;top:398.43px;font-size:9.915px;color:#1c1c1c;transform:scaleY(1.1024);transform-origin:0 0;">EMIL</div>
<div class="t mono" style="right:783.50px;top:398.43px;font-size:9.915px;color:#1c1c1c;transform:scaleY(1.1024);transform-origin:0 0;">2<span class="z" style="letter-spacing:0.22px;margin-left:0.22px">0</span>.<span class="z" style="letter-spacing:0.22px;margin-left:0.22px">0</span></div>
<div class="t mono" style="right:724.50px;top:398.43px;font-size:9.915px;color:#1c1c1c;transform:scaleY(1.1024);transform-origin:0 0;">2</div>
<div class="t mono" style="left:305.00px;top:398.43px;font-size:9.915px;color:#1c1c1c;transform:scaleY(1.1024);transform-origin:0 0;">A</div>
<div class="t mono" style="left:322.00px;top:398.43px;font-size:9.915px;color:#1c1c1c;transform:scaleY(1.1024);transform-origin:0 0;">A</div>
<div class="t mono" style="right:648.00px;top:398.43px;font-size:9.915px;color:#1c1c1c;transform:scaleY(1.1024);transform-origin:0 0;">3183</div>
<div class="t mono" style="right:582.50px;top:398.43px;font-size:9.915px;color:#1c1c1c;transform:scaleY(1.1024);transform-origin:0 0;">1145.916</div>
<div class="ab" style="left:23px;top:413px;width:218px;height:20px;background:#d4d4d4;"></div>
<div class="ab" style="left:241px;top:413px;width:200px;height:20px;background:#fff;"></div>
<div class="ab" style="left:241px;top:413px;width:59px;height:20px;background:#ffff00;"></div>
<div class="t mono" style="left:31.05px;top:418.06px;font-size:9.915px;color:#1c1c1c;transform:scaleY(1.1024);transform-origin:0 0;">12</div>
<div class="t mono" style="left:57.30px;top:418.06px;font-size:9.915px;color:#1c1c1c;transform:scaleY(1.1024);transform-origin:0 0;">Contouring-F</div>
<div class="t mono" style="left:158.50px;top:418.06px;font-size:9.915px;color:#1c1c1c;transform:scaleY(1.1024);transform-origin:0 0;">EMIL</div>
<div class="t mono" style="right:783.50px;top:418.06px;font-size:9.915px;color:#1c1c1c;transform:scaleY(1.1024);transform-origin:0 0;">16.<span class="z" style="letter-spacing:0.22px;margin-left:0.22px">0</span></div>
<div class="t mono" style="right:724.50px;top:418.06px;font-size:9.915px;color:#1c1c1c;transform:scaleY(1.1024);transform-origin:0 0;">3</div>
<div class="t mono" style="left:305.00px;top:418.06px;font-size:9.915px;color:#1c1c1c;transform:scaleY(1.1024);transform-origin:0 0;">A</div>
<div class="t mono" style="left:322.00px;top:418.06px;font-size:9.915px;color:#1c1c1c;transform:scaleY(1.1024);transform-origin:0 0;">A</div>
<div class="t mono" style="right:648.00px;top:418.06px;font-size:9.915px;color:#1c1c1c;transform:scaleY(1.1024);transform-origin:0 0;">3979</div>
<div class="t mono" style="right:582.50px;top:418.06px;font-size:9.915px;color:#1c1c1c;transform:scaleY(1.1024);transform-origin:0 0;">891.268</div>
<div class="ab" style="left:23px;top:433px;width:218px;height:20px;background:#d4d4d4;"></div>
<div class="ab" style="left:241px;top:433px;width:200px;height:20px;background:#fff;"></div>
<div class="ab" style="left:241px;top:433px;width:59px;height:20px;background:#ffff00;"></div>
<div class="t mono" style="left:31.05px;top:437.69px;font-size:9.915px;color:#1c1c1c;transform:scaleY(1.1024);transform-origin:0 0;">13</div>
<div class="t mono" style="left:57.30px;top:437.69px;font-size:9.915px;color:#1c1c1c;transform:scaleY(1.1024);transform-origin:0 0;">Contouring-F</div>
<div class="t mono" style="left:158.50px;top:437.69px;font-size:9.915px;color:#1c1c1c;transform:scaleY(1.1024);transform-origin:0 0;">EMIL</div>
<div class="t mono" style="right:783.50px;top:437.69px;font-size:9.915px;color:#1c1c1c;transform:scaleY(1.1024);transform-origin:0 0;">1<span class="z" style="letter-spacing:0.22px;margin-left:0.22px">0</span>.<span class="z" style="letter-spacing:0.22px;margin-left:0.22px">0</span></div>
<div class="t mono" style="right:724.50px;top:437.69px;font-size:9.915px;color:#1c1c1c;transform:scaleY(1.1024);transform-origin:0 0;">8</div>
<div class="t mono" style="left:305.00px;top:437.69px;font-size:9.915px;color:#1c1c1c;transform:scaleY(1.1024);transform-origin:0 0;">A</div>
<div class="t mono" style="left:322.00px;top:437.69px;font-size:9.915px;color:#1c1c1c;transform:scaleY(1.1024);transform-origin:0 0;">A</div>
<div class="t mono" style="right:648.00px;top:437.69px;font-size:9.915px;color:#1c1c1c;transform:scaleY(1.1024);transform-origin:0 0;">1<span class="z" style="letter-spacing:0.22px;margin-left:0.22px">0</span><span class="z" style="letter-spacing:0.22px;margin-left:0.22px">0</span><span class="z" style="letter-spacing:0.22px;margin-left:0.22px">0</span><span class="z" style="letter-spacing:0.22px;margin-left:0.22px">0</span></div>
<div class="t mono" style="right:582.50px;top:437.69px;font-size:9.915px;color:#1c1c1c;transform:scaleY(1.1024);transform-origin:0 0;">157<span class="z" style="letter-spacing:0.22px;margin-left:0.22px">0</span>.796</div>
<div class="ab" style="left:23px;top:453px;width:218px;height:19px;background:#d4d4d4;"></div>
<div class="ab" style="left:241px;top:453px;width:200px;height:19px;background:#fff;"></div>
<div class="ab" style="left:241px;top:453px;width:59px;height:19px;background:#ffff00;"></div>
<div class="t mono" style="left:31.05px;top:457.32px;font-size:9.915px;color:#1c1c1c;transform:scaleY(1.1024);transform-origin:0 0;">14</div>
<div class="t mono" style="left:57.30px;top:457.32px;font-size:9.915px;color:#1c1c1c;transform:scaleY(1.1024);transform-origin:0 0;">Chamfering</div>
<div class="t mono" style="left:158.50px;top:457.32px;font-size:9.915px;color:#1c1c1c;transform:scaleY(1.1024);transform-origin:0 0;">DRL</div>
<div class="t mono" style="right:783.50px;top:457.32px;font-size:9.915px;color:#1c1c1c;transform:scaleY(1.1024);transform-origin:0 0;">12.<span class="z" style="letter-spacing:0.22px;margin-left:0.22px">0</span></div>
<div class="t mono" style="right:724.50px;top:457.32px;font-size:9.915px;color:#1c1c1c;transform:scaleY(1.1024);transform-origin:0 0;">8</div>
<div class="t mono" style="left:305.00px;top:457.32px;font-size:9.915px;color:#1c1c1c;transform:scaleY(1.1024);transform-origin:0 0;">A</div>
<div class="t mono" style="right:648.00px;top:457.32px;font-size:9.915px;color:#1c1c1c;transform:scaleY(1.1024);transform-origin:0 0;">8<span class="z" style="letter-spacing:0.22px;margin-left:0.22px">0</span><span class="z" style="letter-spacing:0.22px;margin-left:0.22px">0</span><span class="z" style="letter-spacing:0.22px;margin-left:0.22px">0</span></div>
<div class="t mono" style="right:582.50px;top:457.32px;font-size:9.915px;color:#1c1c1c;transform:scaleY(1.1024);transform-origin:0 0;">8<span class="z" style="letter-spacing:0.22px;margin-left:0.22px">0</span><span class="z" style="letter-spacing:0.22px;margin-left:0.22px">0</span>.<span class="z" style="letter-spacing:0.22px;margin-left:0.22px">0</span><span class="z" style="letter-spacing:0.22px;margin-left:0.22px">0</span><span class="z" style="letter-spacing:0.22px;margin-left:0.22px">0</span></div>
<div class="ab" style="left:23px;top:472px;width:218px;height:20px;background:#d4d4d4;"></div>
<div class="ab" style="left:241px;top:472px;width:200px;height:20px;background:#fff;"></div>
<div class="ab" style="left:241px;top:472px;width:59px;height:20px;background:#ffff00;"></div>
<div class="t mono" style="left:31.05px;top:476.95px;font-size:9.915px;color:#1c1c1c;transform:scaleY(1.1024);transform-origin:0 0;">15</div>
<div class="t mono" style="left:57.30px;top:476.95px;font-size:9.915px;color:#1c1c1c;transform:scaleY(1.1024);transform-origin:0 0;">Contouring-R</div>
<div class="t mono" style="left:158.50px;top:476.95px;font-size:9.915px;color:#1c1c1c;transform:scaleY(1.1024);transform-origin:0 0;">EMIL</div>
<div class="t mono" style="right:783.50px;top:476.95px;font-size:9.915px;color:#1c1c1c;transform:scaleY(1.1024);transform-origin:0 0;">2<span class="z" style="letter-spacing:0.22px;margin-left:0.22px">0</span>.<span class="z" style="letter-spacing:0.22px;margin-left:0.22px">0</span></div>
<div class="t mono" style="right:724.50px;top:476.95px;font-size:9.915px;color:#1c1c1c;transform:scaleY(1.1024);transform-origin:0 0;">2</div>
<div class="t mono" style="left:305.00px;top:476.95px;font-size:9.915px;color:#1c1c1c;transform:scaleY(1.1024);transform-origin:0 0;">A</div>
<div class="t mono" style="left:322.00px;top:476.95px;font-size:9.915px;color:#1c1c1c;transform:scaleY(1.1024);transform-origin:0 0;">A</div>
<div class="t mono" style="right:648.00px;top:476.95px;font-size:9.915px;color:#1c1c1c;transform:scaleY(1.1024);transform-origin:0 0;">3183</div>
<div class="t mono" style="right:582.50px;top:476.95px;font-size:9.915px;color:#1c1c1c;transform:scaleY(1.1024);transform-origin:0 0;">1145.916</div>
<div class="ab" style="left:23px;top:492px;width:218px;height:20px;background:#d4d4d4;"></div>
<div class="ab" style="left:241px;top:492px;width:200px;height:20px;background:#fff;"></div>
<div class="ab" style="left:241px;top:492px;width:59px;height:20px;background:#ffff00;"></div>
<div class="t mono" style="left:31.05px;top:496.58px;font-size:9.915px;color:#1c1c1c;transform:scaleY(1.1024);transform-origin:0 0;">16</div>
<div class="t mono" style="left:57.30px;top:496.58px;font-size:9.915px;color:#1c1c1c;transform:scaleY(1.1024);transform-origin:0 0;">Contouring-F</div>
<div class="t mono" style="left:158.50px;top:496.58px;font-size:9.915px;color:#1c1c1c;transform:scaleY(1.1024);transform-origin:0 0;">EMIL</div>
<div class="t mono" style="right:783.50px;top:496.58px;font-size:9.915px;color:#1c1c1c;transform:scaleY(1.1024);transform-origin:0 0;">16.<span class="z" style="letter-spacing:0.22px;margin-left:0.22px">0</span></div>
<div class="t mono" style="right:724.50px;top:496.58px;font-size:9.915px;color:#1c1c1c;transform:scaleY(1.1024);transform-origin:0 0;">3</div>
<div class="t mono" style="left:305.00px;top:496.58px;font-size:9.915px;color:#1c1c1c;transform:scaleY(1.1024);transform-origin:0 0;">A</div>
<div class="t mono" style="left:322.00px;top:496.58px;font-size:9.915px;color:#1c1c1c;transform:scaleY(1.1024);transform-origin:0 0;">A</div>
<div class="t mono" style="right:648.00px;top:496.58px;font-size:9.915px;color:#1c1c1c;transform:scaleY(1.1024);transform-origin:0 0;">3979</div>
<div class="t mono" style="right:582.50px;top:496.58px;font-size:9.915px;color:#1c1c1c;transform:scaleY(1.1024);transform-origin:0 0;">891.268</div>
<div class="ab" style="left:23px;top:512px;width:218px;height:19px;background:#d4d4d4;"></div>
<div class="ab" style="left:241px;top:512px;width:200px;height:19px;background:#fff;"></div>
<div class="ab" style="left:241px;top:512px;width:59px;height:19px;background:#ffff00;"></div>
<div class="t mono" style="left:31.05px;top:516.21px;font-size:9.915px;color:#1c1c1c;transform:scaleY(1.1024);transform-origin:0 0;">17</div>
<div class="t mono" style="left:57.30px;top:516.21px;font-size:9.915px;color:#1c1c1c;transform:scaleY(1.1024);transform-origin:0 0;">Contouring-F</div>
<div class="t mono" style="left:158.50px;top:516.21px;font-size:9.915px;color:#1c1c1c;transform:scaleY(1.1024);transform-origin:0 0;">EMIL</div>
<div class="t mono" style="right:783.50px;top:516.21px;font-size:9.915px;color:#1c1c1c;transform:scaleY(1.1024);transform-origin:0 0;">1<span class="z" style="letter-spacing:0.22px;margin-left:0.22px">0</span>.<span class="z" style="letter-spacing:0.22px;margin-left:0.22px">0</span></div>
<div class="t mono" style="right:724.50px;top:516.21px;font-size:9.915px;color:#1c1c1c;transform:scaleY(1.1024);transform-origin:0 0;">8</div>
<div class="t mono" style="left:305.00px;top:516.21px;font-size:9.915px;color:#1c1c1c;transform:scaleY(1.1024);transform-origin:0 0;">A</div>
<div class="t mono" style="left:322.00px;top:516.21px;font-size:9.915px;color:#1c1c1c;transform:scaleY(1.1024);transform-origin:0 0;">A</div>
<div class="t mono" style="right:648.00px;top:516.21px;font-size:9.915px;color:#1c1c1c;transform:scaleY(1.1024);transform-origin:0 0;">1<span class="z" style="letter-spacing:0.22px;margin-left:0.22px">0</span><span class="z" style="letter-spacing:0.22px;margin-left:0.22px">0</span><span class="z" style="letter-spacing:0.22px;margin-left:0.22px">0</span><span class="z" style="letter-spacing:0.22px;margin-left:0.22px">0</span></div>
<div class="t mono" style="right:582.50px;top:516.21px;font-size:9.915px;color:#1c1c1c;transform:scaleY(1.1024);transform-origin:0 0;">157<span class="z" style="letter-spacing:0.22px;margin-left:0.22px">0</span>.796</div>
<div class="ab" style="left:23px;top:531px;width:218px;height:20px;background:#d4d4d4;"></div>
<div class="ab" style="left:241px;top:531px;width:200px;height:20px;background:#fff;"></div>
<div class="t mono" style="left:31.05px;top:535.84px;font-size:9.915px;color:#1c1c1c;transform:scaleY(1.1024);transform-origin:0 0;">18</div>
<div class="ab" style="left:23px;top:551px;width:218px;height:19px;background:#d4d4d4;"></div>
<div class="ab" style="left:241px;top:551px;width:200px;height:19px;background:#fff;"></div>
<div class="t mono" style="left:31.05px;top:555.47px;font-size:9.915px;color:#1c1c1c;transform:scaleY(1.1024);transform-origin:0 0;">19</div>
<div class="ab" style="left:23px;top:570px;width:218px;height:20px;background:#d4d4d4;"></div>
<div class="ab" style="left:241px;top:570px;width:200px;height:20px;background:#fff;"></div>
<div class="t mono" style="left:31.05px;top:575.10px;font-size:9.915px;color:#1c1c1c;transform:scaleY(1.1024);transform-origin:0 0;">2<span class="z" style="letter-spacing:0.22px;margin-left:0.22px">0</span></div>
<div class="ab" style="left:23px;top:590px;width:218px;height:20px;background:#d4d4d4;"></div>
<div class="ab" style="left:241px;top:590px;width:200px;height:20px;background:#fff;"></div>
<div class="t mono" style="left:31.05px;top:594.73px;font-size:9.915px;color:#1c1c1c;transform:scaleY(1.1024);transform-origin:0 0;">21</div>
<div class="ab" style="left:23px;top:610px;width:218px;height:19px;background:#d4d4d4;"></div>
<div class="ab" style="left:241px;top:610px;width:200px;height:19px;background:#fff;"></div>
<div class="t mono" style="left:31.05px;top:614.36px;font-size:9.915px;color:#1c1c1c;transform:scaleY(1.1024);transform-origin:0 0;">22</div>
<div class="ab" style="left:23px;top:629px;width:218px;height:20px;background:#d4d4d4;"></div>
<div class="ab" style="left:241px;top:629px;width:200px;height:20px;background:#fff;"></div>
<div class="t mono" style="left:31.05px;top:633.99px;font-size:9.915px;color:#1c1c1c;transform:scaleY(1.1024);transform-origin:0 0;">23</div>
<div class="ab" style="left:22px;top:217px;width:420px;height:1px;background:#1e1e1e;"></div>
<div class="ab" style="left:22px;top:218px;width:420px;height:0.5px;background:rgba(30,30,30,0.45);"></div>
<div class="ab" style="left:22px;top:237px;width:420px;height:1px;background:#1e1e1e;"></div>
<div class="ab" style="left:22px;top:238px;width:420px;height:0.5px;background:rgba(30,30,30,0.45);"></div>
<div class="ab" style="left:22px;top:256px;width:420px;height:1px;background:#1e1e1e;"></div>
<div class="ab" style="left:22px;top:257px;width:420px;height:0.5px;background:rgba(30,30,30,0.45);"></div>
<div class="ab" style="left:22px;top:276px;width:420px;height:1px;background:#1e1e1e;"></div>
<div class="ab" style="left:22px;top:277px;width:420px;height:0.5px;background:rgba(30,30,30,0.45);"></div>
<div class="ab" style="left:22px;top:296px;width:420px;height:1px;background:#1e1e1e;"></div>
<div class="ab" style="left:22px;top:297px;width:420px;height:0.5px;background:rgba(30,30,30,0.45);"></div>
<div class="ab" style="left:22px;top:315px;width:420px;height:1px;background:#1e1e1e;"></div>
<div class="ab" style="left:22px;top:316px;width:420px;height:0.5px;background:rgba(30,30,30,0.45);"></div>
<div class="ab" style="left:22px;top:335px;width:420px;height:1px;background:#1e1e1e;"></div>
<div class="ab" style="left:22px;top:336px;width:420px;height:0.5px;background:rgba(30,30,30,0.45);"></div>
<div class="ab" style="left:22px;top:355px;width:420px;height:1px;background:#1e1e1e;"></div>
<div class="ab" style="left:22px;top:356px;width:420px;height:0.5px;background:rgba(30,30,30,0.45);"></div>
<div class="ab" style="left:22px;top:374px;width:420px;height:1px;background:#1e1e1e;"></div>
<div class="ab" style="left:22px;top:375px;width:420px;height:0.5px;background:rgba(30,30,30,0.45);"></div>
<div class="ab" style="left:22px;top:394px;width:420px;height:1px;background:#1e1e1e;"></div>
<div class="ab" style="left:22px;top:395px;width:420px;height:0.5px;background:rgba(30,30,30,0.45);"></div>
<div class="ab" style="left:22px;top:413px;width:420px;height:1px;background:#1e1e1e;"></div>
<div class="ab" style="left:22px;top:414px;width:420px;height:0.5px;background:rgba(30,30,30,0.45);"></div>
<div class="ab" style="left:22px;top:433px;width:420px;height:1px;background:#1e1e1e;"></div>
<div class="ab" style="left:22px;top:434px;width:420px;height:0.5px;background:rgba(30,30,30,0.45);"></div>
<div class="ab" style="left:22px;top:453px;width:420px;height:1px;background:#1e1e1e;"></div>
<div class="ab" style="left:22px;top:454px;width:420px;height:0.5px;background:rgba(30,30,30,0.45);"></div>
<div class="ab" style="left:22px;top:472px;width:420px;height:1px;background:#1e1e1e;"></div>
<div class="ab" style="left:22px;top:473px;width:420px;height:0.5px;background:rgba(30,30,30,0.45);"></div>
<div class="ab" style="left:22px;top:492px;width:420px;height:1px;background:#1e1e1e;"></div>
<div class="ab" style="left:22px;top:493px;width:420px;height:0.5px;background:rgba(30,30,30,0.45);"></div>
<div class="ab" style="left:22px;top:512px;width:420px;height:1px;background:#1e1e1e;"></div>
<div class="ab" style="left:22px;top:513px;width:420px;height:0.5px;background:rgba(30,30,30,0.45);"></div>
<div class="ab" style="left:22px;top:531px;width:420px;height:1px;background:#1e1e1e;"></div>
<div class="ab" style="left:22px;top:532px;width:420px;height:0.5px;background:rgba(30,30,30,0.45);"></div>
<div class="ab" style="left:22px;top:551px;width:420px;height:1px;background:#1e1e1e;"></div>
<div class="ab" style="left:22px;top:552px;width:420px;height:0.5px;background:rgba(30,30,30,0.45);"></div>
<div class="ab" style="left:22px;top:570px;width:420px;height:1px;background:#1e1e1e;"></div>
<div class="ab" style="left:22px;top:571px;width:420px;height:0.5px;background:rgba(30,30,30,0.45);"></div>
<div class="ab" style="left:22px;top:590px;width:420px;height:1px;background:#1e1e1e;"></div>
<div class="ab" style="left:22px;top:591px;width:420px;height:0.5px;background:rgba(30,30,30,0.45);"></div>
<div class="ab" style="left:22px;top:610px;width:420px;height:1px;background:#1e1e1e;"></div>
<div class="ab" style="left:22px;top:611px;width:420px;height:0.5px;background:rgba(30,30,30,0.45);"></div>
<div class="ab" style="left:22px;top:629px;width:420px;height:1px;background:#1e1e1e;"></div>
<div class="ab" style="left:22px;top:630px;width:420px;height:0.5px;background:rgba(30,30,30,0.45);"></div>
<div class="ab" style="left:22px;top:649px;width:420px;height:1px;background:#1e1e1e;"></div>
<div class="ab" style="left:22px;top:650px;width:420px;height:0.5px;background:rgba(30,30,30,0.45);"></div>
<div class="ab" style="left:51px;top:197px;width:1px;height:453px;background:#1e1e1e;"></div>
<div class="ab" style="left:52px;top:197px;width:0.5px;height:453px;background:rgba(30,30,30,0.45);"></div>
<div class="ab" style="left:152px;top:197px;width:1px;height:453px;background:#1e1e1e;"></div>
<div class="ab" style="left:153px;top:197px;width:0.5px;height:453px;background:rgba(30,30,30,0.45);"></div>
<div class="ab" style="left:199px;top:197px;width:1px;height:453px;background:#1e1e1e;"></div>
<div class="ab" style="left:200px;top:197px;width:0.5px;height:453px;background:rgba(30,30,30,0.45);"></div>
<div class="ab" style="left:240px;top:197px;width:1px;height:453px;background:#1e1e1e;"></div>
<div class="ab" style="left:241px;top:197px;width:0.5px;height:453px;background:rgba(30,30,30,0.45);"></div>
<div class="ab" style="left:300px;top:197px;width:1px;height:453px;background:#1e1e1e;"></div>
<div class="ab" style="left:301px;top:197px;width:0.5px;height:453px;background:rgba(30,30,30,0.45);"></div>
<div class="ab" style="left:317px;top:197px;width:1px;height:453px;background:#1e1e1e;"></div>
<div class="ab" style="left:318px;top:197px;width:0.5px;height:453px;background:rgba(30,30,30,0.45);"></div>
<div class="ab" style="left:334px;top:197px;width:1px;height:453px;background:#1e1e1e;"></div>
<div class="ab" style="left:335px;top:197px;width:0.5px;height:453px;background:rgba(30,30,30,0.45);"></div>
<div class="ab" style="left:376px;top:197px;width:1px;height:453px;background:#1e1e1e;"></div>
<div class="ab" style="left:377px;top:197px;width:0.5px;height:453px;background:rgba(30,30,30,0.45);"></div>
<div class="ab" style="left:441px;top:197px;width:1px;height:453px;background:#1e1e1e;"></div>
<div class="ab" style="left:442px;top:197px;width:0.5px;height:453px;background:rgba(30,30,30,0.45);"></div>
<div class="ab" style="left:22.3px;top:197.2px;width:419.7px;height:19.7px;border:1.6px solid #000080"></div>
<svg style="left:13px;top:192px;" width="10" height="12" viewBox="0 0 10 12"><path d="M1 0 L8 5.5 L1 11Z" fill="#0000ff"/></svg>
<div class="ab" style="left:442px;top:197px;width:15px;height:453px;background:#f0f0f0;"></div>
<div class="ab" style="left:442px;top:197px;width:14px;height:15px;background:#f0f0f0;border-right:1px solid #a0a0a0;border-bottom:1px solid #a0a0a0;border-top:1px solid #fff;border-left:1px solid #fff"></div>
<svg style="left:446px;top:202px;" width="8" height="5" viewBox="0 0 8 5"><path d="M0 4 L3.5 0 L7 4Z" fill="#000"/></svg>
<div class="ab" style="left:442px;top:212px;width:14px;height:16px;background:#ececec;border-right:1px solid #a0a0a0;border-bottom:1px solid #a0a0a0"></div>
<div class="ab" style="left:442px;top:634px;width:14px;height:16px;background:#ececec;border-right:1px solid #a0a0a0;border-bottom:1px solid #a0a0a0"></div>
<svg style="left:446px;top:640px;" width="8" height="5" viewBox="0 0 8 5"><path d="M0 0 L3.5 4 L7 0Z" fill="#000"/></svg>
</div>
<div class="ab" style="left:461px;top:148px;width:493px;height:529px;background:#f8f8f8;"></div>
<div class="ab" style="left:465px;top:153px;width:485px;height:517px;background:#000;"></div>
<svg style="left:0px;top:0px;shape-rendering:crispEdges;" width="1024" height="835" viewBox="0 0 1024 835"><rect x="553.4" y="331.7" width="310.2" height="160.5" fill="#ffff00"/><rect x="557.5" y="343.5" width="302.0" height="139.0" rx="33.0" fill="none" stroke="#7c7cb4" stroke-width="1.5"/><rect x="560.5" y="346.5" width="296.0" height="133.0" rx="30.0" fill="none" stroke="#7c7cb4" stroke-width="1.5"/><rect x="577.5" y="363.5" width="262.0" height="98.0" rx="15.0" fill="none" stroke="#4c4ce0" stroke-width="1.4"/><rect x="580.5" y="366.5" width="256.0" height="92.0" rx="12.0" fill="none" stroke="#4c4ce0" stroke-width="1.4"/><rect x="591.5" y="386.5" width="233.0" height="52.0" rx="26.0" fill="none" stroke="#4c4ce0" stroke-width="1.4"/><line x1="466.5" y1="412.7" x2="950" y2="412.7" stroke="#c8c8c8" stroke-width="1.2"/><line x1="708.4" y1="154" x2="708.4" y2="670" stroke="#c8c8c8" stroke-width="1.2"/><path d="M704.3 167.4 L708.4 154.8 L712.7 167.4" fill="none" stroke="#c8c8c8" stroke-width="1.1"/><path d="M937.5 408.5 L950 412.7 L937.5 416.9" fill="none" stroke="#c8c8c8" stroke-width="1.1"/><line x1="704.3" y1="236.2" x2="712.7" y2="236.2" stroke="#c8c8c8" stroke-width="1.1"/><line x1="704.3" y1="324.2" x2="712.7" y2="324.2" stroke="#c8c8c8" stroke-width="1.1"/><line x1="704.3" y1="499.7" x2="712.7" y2="499.7" stroke="#c8c8c8" stroke-width="1.1"/><line x1="704.3" y1="587.7" x2="712.7" y2="587.7" stroke="#c8c8c8" stroke-width="1.1"/><line x1="532.4" y1="408.5" x2="532.4" y2="417" stroke="#c8c8c8" stroke-width="1.1"/><line x1="884.4" y1="408.5" x2="884.4" y2="417" stroke="#c8c8c8" stroke-width="1.1"/><path d="M511.5 416.5 H521.5 M516.6 411.5 V421.5" stroke="#c8c8c8" stroke-width="1.1"/><circle cx="615.7" cy="353.2" r="3.3" fill="none" stroke="#0000ff" stroke-width="1.9" shape-rendering="geometricPrecision"/><circle cx="615.7" cy="470.2" r="3.3" fill="none" stroke="#0000ff" stroke-width="1.9" shape-rendering="geometricPrecision"/><circle cx="642.2" cy="353.2" r="3.3" fill="none" stroke="#0000ff" stroke-width="1.9" shape-rendering="geometricPrecision"/><circle cx="642.2" cy="470.2" r="3.3" fill="none" stroke="#0000ff" stroke-width="1.9" shape-rendering="geometricPrecision"/><circle cx="708.3" cy="353.2" r="3.3" fill="none" stroke="#0000ff" stroke-width="1.9" shape-rendering="geometricPrecision"/><circle cx="708.3" cy="470.2" r="3.3" fill="none" stroke="#0000ff" stroke-width="1.9" shape-rendering="geometricPrecision"/><circle cx="774.2" cy="353.2" r="3.3" fill="none" stroke="#0000ff" stroke-width="1.9" shape-rendering="geometricPrecision"/><circle cx="774.2" cy="470.2" r="3.3" fill="none" stroke="#0000ff" stroke-width="1.9" shape-rendering="geometricPrecision"/><circle cx="800.6" cy="353.2" r="3.3" fill="none" stroke="#0000ff" stroke-width="1.9" shape-rendering="geometricPrecision"/><circle cx="800.6" cy="470.2" r="3.3" fill="none" stroke="#0000ff" stroke-width="1.9" shape-rendering="geometricPrecision"/><circle cx="567.2" cy="384.1" r="3.3" fill="none" stroke="#0000ff" stroke-width="1.9" shape-rendering="geometricPrecision"/><circle cx="567.2" cy="412.7" r="3.3" fill="none" stroke="#0000ff" stroke-width="1.9" shape-rendering="geometricPrecision"/><circle cx="567.2" cy="440.0" r="3.3" fill="none" stroke="#0000ff" stroke-width="1.9" shape-rendering="geometricPrecision"/><circle cx="848.8" cy="384.1" r="3.3" fill="none" stroke="#0000ff" stroke-width="1.9" shape-rendering="geometricPrecision"/><circle cx="848.8" cy="412.7" r="3.3" fill="none" stroke="#0000ff" stroke-width="1.9" shape-rendering="geometricPrecision"/><circle cx="848.8" cy="440.0" r="3.3" fill="none" stroke="#0000ff" stroke-width="1.9" shape-rendering="geometricPrecision"/><path d="M708.4 412.7 V395.0 A17.7 17.7 0 0 1 726.1 412.7 Z" fill="#00ffff"/><path d="M708.4 412.7 V430.4 A17.7 17.7 0 0 1 690.7 412.7 Z" fill="#00ffff"/><circle cx="708.4" cy="412.7" r="17.2" fill="none" stroke="#00ffff" stroke-width="1.3"/><line x1="553.4" y1="412.7" x2="863.6" y2="412.7" stroke="#ffffff" stroke-width="1.3" opacity="0.85"/><line x1="708.4" y1="331.7" x2="708.4" y2="492.2" stroke="#ffffff" stroke-width="1.3" opacity="0.85"/><circle cx="707.8" cy="377.7" r="8.6" fill="none" stroke="#ff3a00" stroke-width="1.5"/><circle cx="619.7" cy="412.7" r="8.6" fill="none" stroke="#ff3a00" stroke-width="1.5"/><circle cx="795.6" cy="412.7" r="8.6" fill="none" stroke="#ff3a00" stroke-width="1.5"/><circle cx="708.3" cy="412.7" r="8.6" fill="none" stroke="#ff3a00" stroke-width="1.5"/><path d="M614.7 412.7 H624.7 M619.7 407.7 V417.7 M790.6 412.7 H800.6 M795.6 407.7 V417.7" stroke="#ffffff" stroke-width="1" opacity="0.6"/></svg>
<div class="t" style="left:682.20px;top:228.36px;font-size:13.500px;color:#f0f0f0;font-weight:bold;">200</div>
<div class="t" style="left:682.20px;top:317.56px;font-size:13.500px;color:#f0f0f0;font-weight:bold;">100</div>
<div class="t" style="left:678.30px;top:493.56px;font-size:13.500px;color:#f0f0f0;font-weight:bold;letter-spacing:-0.1px">-100</div>
<div class="t" style="left:678.30px;top:581.06px;font-size:13.500px;color:#f0f0f0;font-weight:bold;letter-spacing:-0.1px">-200</div>
<div class="t" style="left:517.20px;top:420.26px;font-size:13.500px;color:#f0f0f0;font-weight:bold;letter-spacing:0.2px">-200</div>
<div class="t" style="left:871.50px;top:420.26px;font-size:13.500px;color:#f0f0f0;font-weight:bold;letter-spacing:0.2px">200</div>
<div class="t" style="left:606.00px;top:420.26px;font-size:13.500px;color:#f0f0f0;font-weight:bold;letter-spacing:-0.6px;opacity:0.85">-100</div>
<div class="t" style="left:784.00px;top:420.26px;font-size:13.500px;color:#f0f0f0;font-weight:bold;opacity:0.85">100</div>
<div class="t" style="left:713.30px;top:154.38px;font-size:14.000px;color:#f0f0f0;">Y</div>
<div class="t" style="left:936.50px;top:391.48px;font-size:14.000px;color:#f0f0f0;">X</div>
<div class="ab" style="left:954px;top:10px;width:63px;height:667px;background:#bcbcbc;"></div>
<div class="ab" style="left:1015.5px;top:166px;width:1.5px;height:511px;background:#5a5a5a;"></div>
<div class="ab" style="left:954px;top:10px;width:63px;height:48px;background:#000"></div>
<div class="ab" style="left:954px;top:10.5px;width:62.6px;height:45.7px;background:#3a3a3a;border-bottom-left-radius:4px"></div>
<svg style="left:0px;top:0px;" width="1024" height="60" viewBox="0 0 1024 60"><path d="M967.8 35.4 L985.4 17.6 L1003 35.4 L999 35.4 L985.4 22.5 L971.8 35.4Z" fill="#b8b8b8"/><path d="M974.6 32.5 L985.4 24.5 L996.5 32.5 V48 H988.3 V37.8 H982.8 V48 H974.6Z" fill="#b8b8b8"/></svg>
<div class="ab" style="left:954px;top:57.5px;width:63px;height:1.2px;background:#e8e8e8;"></div>
<div class="ab" style="left:954px;top:58.7px;width:63px;height:58.5px;background:#0000ff;"></div>
<svg style="left:0px;top:0px;" width="1024" height="120" viewBox="0 0 1024 120"><circle cx="986" cy="88.2" r="25.6" fill="#ffffff"/><circle cx="986" cy="88.2" r="21.9" fill="none" stroke="#ff0000" stroke-width="3.8"/><line x1="970.5" y1="73" x2="1001.5" y2="102" stroke="#ff0000" stroke-width="3.6"/><g fill="#000080"><rect x="972.2" y="79" width="11.9" height="10.7"/><path d="M986.8 74.8 H1000.2 V85.9 L997 88.2 H995.2 V99 H991.4 V88.2 H990 L986.8 85.9Z"/><path d="M971.9 97.4 L976.8 91.7 V94.7 H989.1 V100.1 H976.8 V102.8Z"/></g></svg>
<div class="ab" style="left:954px;top:117.2px;width:63px;height:48.8px;background:#2b2b2b;"></div>
<svg style="left:0px;top:0px;" width="1024" height="170" viewBox="0 0 1024 170"><rect x="966.4" y="125" width="29.6" height="9.4" fill="#b4b4b4"/><rect x="966.4" y="137" width="10.6" height="15" fill="#b4b4b4"/><rect x="993.5" y="136.5" width="2" height="4.5" fill="#b4b4b4"/><rect x="977.5" y="150.5" width="4" height="1.5" fill="#b4b4b4"/><g transform="translate(994.7 153.4)"><circle r="7.3" fill="none" stroke="#b4b4b4" stroke-width="4"/><rect x="-2" y="-11" width="4" height="4.5" fill="#b4b4b4" transform="rotate(0)"/><rect x="-2" y="-11" width="4" height="4.5" fill="#b4b4b4" transform="rotate(45)"/><rect x="-2" y="-11" width="4" height="4.5" fill="#b4b4b4" transform="rotate(90)"/><rect x="-2" y="-11" width="4" height="4.5" fill="#b4b4b4" transform="rotate(135)"/><rect x="-2" y="-11" width="4" height="4.5" fill="#b4b4b4" transform="rotate(180)"/><rect x="-2" y="-11" width="4" height="4.5" fill="#b4b4b4" transform="rotate(225)"/><rect x="-2" y="-11" width="4" height="4.5" fill="#b4b4b4" transform="rotate(270)"/><rect x="-2" y="-11" width="4" height="4.5" fill="#b4b4b4" transform="rotate(315)"/></g></svg>
<svg style="left:0px;top:0px;" width="1024" height="420" viewBox="0 0 1024 420"><path d="M954 166 H967 L954 180Z" fill="#585858"/><path d="M954 365 H967 L954 378Z" fill="#585858"/></svg>
<div class="ab" style="left:954px;top:363.5px;width:63px;height:1.7px;background:#3a3a3a;"></div>
<div class="ab" style="left:964.5px;top:178.4px;width:40.8px;height:19.1px;background:#3c3c3c;border-radius:2px"></div>
<svg style="left:0px;top:0px;" width="1024" height="420" viewBox="0 0 1024 420"><g fill="none" stroke="#b4b4b4" stroke-width="1.9"><path d="M980.9 192.3 A5.9 5.9 0 1 1 988.9 192.3"/><line x1="969.7" y1="184.2" x2="977.3" y2="184.2"/><line x1="992.5" y1="184.2" x2="1000.1" y2="184.2"/><line x1="966.9" y1="188.0" x2="977.3" y2="188.0"/><line x1="992.5" y1="188.0" x2="1002.9" y2="188.0"/><line x1="969.7" y1="191.7" x2="977.3" y2="191.7"/><line x1="992.5" y1="191.7" x2="1000.1" y2="191.7"/></g></svg>
<div class="ab" style="left:957.2px;top:210.0px;width:55.6px;height:45.0px;background:#2b2b2b;border-radius:4px"></div>
<svg style="left:0px;top:0px;" width="1024" height="420" viewBox="0 0 1024 420"><circle cx="984.9" cy="230.8" r="11.5" fill="none" stroke="#4a4a4a" stroke-width="2.6"/><path d="M975.5 237.5 A11.5 11.5 0 0 1 994 224" fill="none" stroke="#1a82d8" stroke-width="2.6"/><path d="M992.5 222.2 A11.5 11.5 0 0 1 992 240.5" fill="none" stroke="#f5c400" stroke-width="2.6"/><g stroke-width="2.2"><line x1="962.7" y1="224.1" x2="968.5" y2="224.1" stroke="#4a4a4a"/><line x1="968.5" y1="224.1" x2="973.5" y2="224.1" stroke="#1a82d8"/><line x1="962.7" y1="230.8" x2="969.5" y2="230.8" stroke="#f5c400"/><line x1="969.5" y1="230.8" x2="973" y2="230.8" stroke="#4a4a4a"/><line x1="964.5" y1="238.9" x2="967.5" y2="238.9" stroke="#f5c400"/><line x1="967.5" y1="238.9" x2="973.5" y2="238.9" stroke="#1a82d8"/><line x1="996.3" y1="224.1" x2="1001.5" y2="224.1" stroke="#1a82d8"/><line x1="1001.5" y1="224.1" x2="1007" y2="224.1" stroke="#f5c400"/><line x1="996.3" y1="230.8" x2="1000" y2="230.8" stroke="#1a82d8"/><line x1="1000" y1="230.8" x2="1006" y2="230.8" stroke="#4a4a4a"/><line x1="996.3" y1="238.9" x2="1001.5" y2="238.9" stroke="#1a82d8"/><line x1="1001.5" y1="238.9" x2="1005" y2="238.9" stroke="#f5c400"/></g></svg>
<div class="t" style="left:991.40px;top:243.35px;font-size:10.400px;color:#e6e6e6;font-weight:bold;">W1</div>
<div class="ab" style="left:957.2px;top:261.7px;width:55.6px;height:44.9px;background:#2b2b2b;border-radius:4px"></div>
<svg style="left:0px;top:0px;" width="1024" height="420" viewBox="0 0 1024 420"><rect x="962.5" y="270" width="45" height="24.5" fill="none" stroke="#5a5a5a" stroke-width="1"/><rect x="964.7" y="273" width="40.3" height="18.9" fill="#d8d8d8"/><path d="M968.1 285.2 Q975 276 981 278.5 Q985 280.5 988 285 Q991 289 995 287 Q999 285 1002 280.5" fill="none" stroke="#000" stroke-width="1.5"/></svg>
<div class="ab" style="left:989px;top:294px;width:18px;height:8px;background:#2b2b2b;"></div>
<div class="t" style="left:991.40px;top:294.25px;font-size:10.400px;color:#e6e6e6;font-weight:bold;">W5</div>
<div class="ab" style="left:957.2px;top:312.2px;width:55.6px;height:45.5px;background:#2b2b2b;border-radius:4px"></div>
<svg style="left:0px;top:0px;" width="1024" height="420" viewBox="0 0 1024 420"><rect x="963" y="321" width="18.3" height="25.5" fill="#444" stroke="#5a5a5a" stroke-width="1"/><rect x="981.3" y="321" width="25.5" height="25.5" fill="#3a3a3a" stroke="#5a5a5a" stroke-width="1"/><rect x="984.6" y="324" width="19.4" height="19.4" fill="#000"/><path d="M990 326 H998.7 V341.5 L994.5 338 L990 341.5Z" fill="#d0d0d0"/><path d="M990 331 L998.7 327 M990 335 L998.7 331 M990 339 L998.7 335" stroke="#000" stroke-width="1.2"/></svg>
<div class="ab" style="left:989px;top:346px;width:18.5px;height:9px;background:#2b2b2b;"></div>
<div class="t" style="left:991.40px;top:345.35px;font-size:10.400px;color:#e6e6e6;font-weight:bold;">W4</div>
<svg style="left:0px;top:0px;" width="1024" height="420" viewBox="0 0 1024 420"><path d="M980 386 V377.6 H999.3 V395.7 H981" fill="none" stroke="#3c3c3c" stroke-width="2.2"/><path d="M969.5 387 L978.8 386.3 L978 395 L975.3 392.3 L971.8 397 L969.6 395 L973.3 390.2Z" fill="#3c3c3c"/></svg>
<div class="ab" style="left:957.2px;top:408.7px;width:55.6px;height:45.1px;background:#2b2b2b;border-radius:4px"></div>
<svg style="left:0px;top:0px;" width="1024" height="560" viewBox="0 0 1024 560"><rect x="970.5" y="415.5" width="23" height="22" fill="none" stroke="#c6c6c6" stroke-width="1.6"/><path d="M972.5 418 V424 M975 418 V424 M978 418 V424 M981 418 V424 M985 418 V424 M989 418 V424 M972.5 427 V435 M975.5 427 V435 M979 427 V435" stroke="#c6c6c6" stroke-width="1.6"/><path d="M985.6 427.7 H1000 V445 H985.6Z" fill="#c6c6c6"/><g fill="#c6c6c6"><rect x="984" y="430.5" width="3" height="1.6" rx="0.8"/><rect x="984" y="435" width="3" height="1.6" rx="0.8"/><rect x="984" y="439.5" width="3" height="1.6" rx="0.8"/></g><rect x="991" y="430" width="3" height="3" fill="#2b2b2b"/><path d="M965.5 449.8 Q965.5 444.5 969.4 443.6 L967.8 441.2 L974.3 440.2 L973.6 446.6 L971.8 445.3 L968.7 447.3 Q966.8 448.6 965.5 449.8 Z" fill="#29a8e0"/></svg>
<div class="t" style="left:994.10px;top:441.49px;font-size:10.800px;color:#e6e6e6;font-weight:bold;">S1</div>
<div class="ab" style="left:957.2px;top:460.0px;width:55.6px;height:44.2px;background:#2b2b2b;border-radius:4px"></div>
<svg style="left:0px;top:0px;" width="1024" height="560" viewBox="0 0 1024 560"><path d="M994.5 494.7 H970.5 V466.6 H999.5 V492" fill="none" stroke="#c6c6c6" stroke-width="1.5"/><rect x="972.8" y="469" width="24.5" height="13.5" fill="#3a3a3a" stroke="#c6c6c6" stroke-width="1"/><path d="M974.5 471.5 V479.5 M976.5 471.5 V479.5" stroke="#c6c6c6" stroke-width="1.2"/><path d="M979.5 475.3 H996" stroke="#c6c6c6" stroke-width="0.9"/><path d="M980.5 471.5 H989 M991 472.3 H995.5 M984 478.5 H987 M989 478.5 H993" stroke="#c6c6c6" stroke-width="1.8"/><rect x="976" y="485" width="16" height="9.7" fill="#c6c6c6"/><path d="M976 488.2 H992 M976 491.4 H992 M980.8 485 V494.7 M985.6 485 V494.7" stroke="#2b2b2b" stroke-width="1"/><rect x="970.5" y="484.5" width="4" height="1.8" fill="#c6c6c6"/><path d="M994 485 V492.5" stroke="#c6c6c6" stroke-width="1.4"/><path d="M965.5 500.2 Q965.5 494.9 969.4 494.0 L967.8 491.6 L974.3 490.6 L973.6 497.0 L971.8 495.7 L968.7 497.7 Q966.8 499.0 965.5 500.2 Z" fill="#29a8e0"/></svg>
<div class="ab" style="left:993px;top:494px;width:16px;height:9px;background:#2b2b2b;"></div>
<div class="t" style="left:994.10px;top:492.79px;font-size:10.800px;color:#e6e6e6;font-weight:bold;">S3</div>
<div class="ab" style="left:957.2px;top:511.0px;width:55.6px;height:45.5px;background:#2b2b2b;border-radius:4px"></div>
<svg style="left:0px;top:0px;" width="1024" height="560" viewBox="0 0 1024 560"><path d="M972.5 540 V517.9 H997 V546.5" fill="none" stroke="#c6c6c6" stroke-width="1.5"/><rect x="975.3" y="520.8" width="19" height="6.5" fill="none" stroke="#c6c6c6" stroke-width="1.3"/><g stroke="#c6c6c6" stroke-width="1.3" fill="none"><rect x="975.3" y="530" width="19" height="14.3"/><path d="M975.3 534.8 H994.3 M975.3 539.5 H994.3 M980 530 V544.3 M984.8 530 V544.3 M989.5 530 V544.3"/></g><path d="M976 546.3 H1000" stroke="#c6c6c6" stroke-width="1.5"/><path d="M965.5 551.2 Q965.5 545.9 969.4 545.0 L967.8 542.6 L974.3 541.6 L973.6 548.0 L971.8 546.7 L968.7 548.7 Q966.8 550.0 965.5 551.2 Z" fill="#29a8e0"/></svg>
<div class="ab" style="left:993px;top:545px;width:16px;height:9px;background:#2b2b2b;"></div>
<div class="t" style="left:994.10px;top:543.79px;font-size:10.800px;color:#e6e6e6;font-weight:bold;">S4</div>
<div class="ab" style="left:954px;top:563.2px;width:62px;height:52.5px;background:#1f6ab8;"></div>
<svg style="left:0px;top:0px;" width="1024" height="620" viewBox="0 0 1024 620"><path d="M973.6 563 H995.1 L984.8 573.3Z" fill="#bcbcbc"/><rect x="972.1" y="580.5" width="25.9" height="25.9" rx="2" fill="#fff"/><path d="M1004.5 587 L1011 593.8 L1004.5 600.6Z" fill="#0d3d6e"/></svg>
<div class="t" style="left:975.80px;top:587.68px;font-size:17.800px;color:#1a5aa8;font-weight:bold;">1</div>
<div class="ab" style="left:954px;top:615.7px;width:62px;height:61.5px;background:#2b2b2b;"></div>
<svg style="left:0px;top:0px;" width="1024" height="700" viewBox="0 0 1024 700"><rect x="960.6" y="627.5" width="41.8" height="20.5" fill="none" stroke="#b4b4b4" stroke-width="2"/><g fill="none" stroke="#b4b4b4" stroke-width="1.9"><path d="M977.3 642.4 A6.2 6.2 0 1 1 985.7 642.4"/><line x1="965.5" y1="633.9" x2="973.5" y2="633.9"/><line x1="989.5" y1="633.9" x2="997.5" y2="633.9"/><line x1="962.5" y1="637.8" x2="973.5" y2="637.8"/><line x1="989.5" y1="637.8" x2="1000.5" y2="637.8"/><line x1="965.5" y1="641.6" x2="973.5" y2="641.6"/><line x1="989.5" y1="641.6" x2="997.5" y2="641.6"/></g><path d="M1005 647 H1010.4 V665 H993.4" fill="none" stroke="#b4b4b4" stroke-width="2"/><path d="M982.5 656.3 L990.5 656 L988.6 658.6 Q991.3 661 991.6 665.5 Q989.5 662.5 986.5 661.8 L983.3 664.8Z" fill="#b4b4b4"/><rect x="989" y="650.5" width="2.6" height="3.2" fill="#b4b4b4"/></svg>
<div class="ab" style="left:9px;top:677px;width:1008px;height:29px;background:#f0f0f0;"></div>
<div class="ab" style="left:12.7px;top:677.5px;width:160.7px;height:27px;background:#fff;border-top:1.5px solid #8a8a8a;border-left:1.5px solid #8a8a8a"></div>
<div class="ab" style="left:181px;top:677.5px;width:834px;height:27px;background:#efefef;border-top:1.5px solid #a0a0a0;border-left:1.5px solid #a0a0a0"></div>
<div class="ab" style="left:9px;top:706px;width:1008px;height:58px;background:#f0f0f0;"></div>
<div class="ab" style="left:9.8px;top:707px;width:49.8px;height:57.5px;background:#e1e1e1;border-left:1.5px solid #fbfbfb;border-top:1.5px solid #f6f6f6;border-right:1.5px solid #6a6a6a;border-bottom:1.5px solid #6a6a6a"></div>
<div class="ab" style="left:61.0px;top:707px;width:111.8px;height:57.5px;background:#e1e1e1;border-left:1.5px solid #fbfbfb;border-top:1.5px solid #f6f6f6;border-right:1.5px solid #6a6a6a;border-bottom:1.5px solid #6a6a6a"></div>
<div class="t mono" style="left:71.38px;top:716.21px;font-size:16.747px;color:#000;font-weight:bold;transform:scaleY(1.0515);transform-origin:0 0;">Machining</div>
<div class="t mono" style="left:81.42px;top:739.11px;font-size:16.747px;color:#000;font-weight:bold;transform:scaleY(1.0515);transform-origin:0 0;">Feature</div>
<svg style="left:153.79999999999998px;top:708.5px;" width="19" height="19" viewBox="0 0 19 19"><path d="M0 0 H18 V18Z" fill="#0000ff"/></svg>
<div class="ab" style="left:174.2px;top:707px;width:111.8px;height:57.5px;background:#e1e1e1;border-left:1.5px solid #fbfbfb;border-top:1.5px solid #f6f6f6;border-right:1.5px solid #6a6a6a;border-bottom:1.5px solid #6a6a6a"></div>
<div class="t mono" style="left:189.60px;top:716.21px;font-size:16.747px;color:#000;font-weight:bold;transform:scaleY(1.0515);transform-origin:0 0;">Mac-Tool</div>
<div class="t mono" style="left:209.70px;top:739.11px;font-size:16.747px;color:#000;font-weight:bold;transform:scaleY(1.0515);transform-origin:0 0;">Menu</div>
<svg style="left:267.0px;top:708.5px;" width="19" height="19" viewBox="0 0 19 19"><path d="M0 0 H18 V18Z" fill="#0000ff"/></svg>
<div class="ab" style="left:287.4px;top:707px;width:111.8px;height:57.5px;background:#e1e1e1;border-left:1.5px solid #fbfbfb;border-top:1.5px solid #f6f6f6;border-right:1.5px solid #6a6a6a;border-bottom:1.5px solid #6a6a6a"></div>
<div class="t mono" style="left:297.77px;top:716.21px;font-size:16.747px;color:#000;font-weight:bold;transform:scaleY(1.0515);transform-origin:0 0;">Machining</div>
<div class="t mono" style="left:317.88px;top:739.11px;font-size:16.747px;color:#000;font-weight:bold;transform:scaleY(1.0515);transform-origin:0 0;">Order</div>
<svg style="left:380.20000000000005px;top:708.5px;" width="19" height="19" viewBox="0 0 19 19"><path d="M0 0 H18 V18Z" fill="#0000ff"/></svg>
<div class="ab" style="left:400.6px;top:707px;width:111.8px;height:57.5px;background:#e1e1e1;border-left:1.5px solid #fbfbfb;border-top:1.5px solid #f6f6f6;border-right:1.5px solid #6a6a6a;border-bottom:1.5px solid #6a6a6a"></div>
<div class="t mono" style="left:410.97px;top:716.21px;font-size:16.747px;color:#000;font-weight:bold;transform:scaleY(1.0515);transform-origin:0 0;">Machining</div>
<div class="t mono" style="left:436.10px;top:739.11px;font-size:16.747px;color:#000;font-weight:bold;transform:scaleY(1.0515);transform-origin:0 0;">Test</div>
<svg style="left:493.4px;top:708.5px;" width="19" height="19" viewBox="0 0 19 19"><path d="M0 0 H18 V18Z" fill="#0000ff"/></svg>
<div class="ab" style="left:513.8px;top:707px;width:111.8px;height:57.5px;background:#e1e1e1;border-left:1.5px solid #fbfbfb;border-top:1.5px solid #f6f6f6;border-right:1.5px solid #6a6a6a;border-bottom:1.5px solid #6a6a6a"></div>
<div class="t mono" style="left:534.23px;top:716.21px;font-size:16.747px;color:#000;font-weight:bold;transform:scaleY(1.0515);transform-origin:0 0;">Program</div>
<div class="t mono" style="left:539.25px;top:739.11px;font-size:16.747px;color:#000;font-weight:bold;transform:scaleY(1.0515);transform-origin:0 0;">Create</div>
<svg style="left:606.6px;top:708.5px;" width="19" height="19" viewBox="0 0 19 19"><path d="M0 0 H18 V18Z" fill="#0000ff"/></svg>
<div class="ab" style="left:627.0px;top:707px;width:111.8px;height:57.5px;background:#e1e1e1;border-left:1.5px solid #fbfbfb;border-top:1.5px solid #f6f6f6;border-right:1.5px solid #6a6a6a;border-bottom:1.5px solid #6a6a6a"></div>
<div class="t mono" style="left:657.48px;top:716.21px;font-size:16.747px;color:#000;font-weight:bold;transform:scaleY(1.0515);transform-origin:0 0;">Blank</div>
<div class="t mono" style="left:647.43px;top:739.11px;font-size:16.747px;color:#000;font-weight:bold;transform:scaleY(1.0515);transform-origin:0 0;">Setting</div>
<svg style="left:719.8000000000001px;top:708.5px;" width="19" height="19" viewBox="0 0 19 19"><path d="M0 0 H18 V18Z" fill="#0000ff"/></svg>
<div class="ab" style="left:740.2px;top:707px;width:111.8px;height:57.5px;background:#e1e1e1;border-left:1.5px solid #fbfbfb;border-top:1.5px solid #f6f6f6;border-right:1.5px solid #6a6a6a;border-bottom:1.5px solid #6a6a6a"></div>
<div class="t mono" style="left:755.60px;top:716.21px;font-size:16.747px;color:#000;font-weight:bold;transform:scaleY(1.0515);transform-origin:0 0;">IGF data</div>
<div class="t mono" style="left:775.70px;top:739.11px;font-size:16.747px;color:#000;font-weight:bold;transform:scaleY(1.0515);transform-origin:0 0;">Save</div>
<svg style="left:833.0px;top:708.5px;" width="19" height="19" viewBox="0 0 19 19"><path d="M0 0 H18 V18Z" fill="#0000ff"/></svg>
<div class="ab" style="left:853.4px;top:707px;width:111.8px;height:57.5px;background:#e1e1e1;border-left:1.5px solid #fbfbfb;border-top:1.5px solid #f6f6f6;border-right:1.5px solid #6a6a6a;border-bottom:1.5px solid #6a6a6a"></div>
<div class="t mono" style="left:888.90px;top:716.21px;font-size:16.747px;color:#000;font-weight:bold;transform:scaleY(1.0515);transform-origin:0 0;">END/</div>
<div class="t mono" style="left:863.77px;top:739.11px;font-size:16.747px;color:#000;font-weight:bold;transform:scaleY(1.0515);transform-origin:0 0;">MACHINING</div>
<div class="ab" style="left:966.6px;top:707px;width:49.9px;height:57.5px;background:#e1e1e1;border-left:1.5px solid #fbfbfb;border-top:1.5px solid #f6f6f6;border-right:1.5px solid #6a6a6a;border-bottom:1.5px solid #6a6a6a"></div>
<svg style="left:0px;top:0px;" width="1024" height="835" viewBox="0 0 1024 835"><path d="M971.5 717.3 L1012.5 736.8 L971.5 756.4Z" fill="#000"/></svg>
<div class="ab" style="left:9px;top:764px;width:1008px;height:65.5px;background:#fff;border:2px solid #3c3c3c;border-top-width:2px"></div>
<div class="t" style="left:13.50px;top:771.78px;font-size:12.100px;color:#9a949a;letter-spacing:-0.55px">Func Key Panel</div>
<svg style="left:0px;top:0px;" width="1024" height="835" viewBox="0 0 1024 835"><line x1="899" y1="779" x2="909" y2="779" stroke="#b0b0b0" stroke-width="1"/><rect x="943.5" y="774" width="9.5" height="9" fill="none" stroke="#e0e0e0" stroke-width="1"/><path d="M989 774 L998.8 783.8 M998.8 774 L989 783.8" stroke="#e0e0e0" stroke-width="1"/></svg>
<div class="ab" style="left:12.0px;top:792.5px;width:47.6px;height:34.5px;background:#d4d0c8;border-left:1.5px solid #f4f4f4;border-top:1.5px solid #f0f0f0;border-right:1.5px solid #6a6a6a"></div>
<div class="ab" style="left:61.0px;top:792.5px;width:111.8px;height:34.5px;background:#d4d0c8;border-left:1.5px solid #f4f4f4;border-top:1.5px solid #f0f0f0;border-right:1.5px solid #6a6a6a"></div>
<div class="t" style="left:16.90px;width:200px;text-align:center;top:801.95px;font-size:19.200px;color:#000;">F1</div>
<div class="ab" style="left:174.2px;top:792.5px;width:111.8px;height:34.5px;background:#d4d0c8;border-left:1.5px solid #f4f4f4;border-top:1.5px solid #f0f0f0;border-right:1.5px solid #6a6a6a"></div>
<div class="t" style="left:130.10px;width:200px;text-align:center;top:801.95px;font-size:19.200px;color:#000;">F2</div>
<div class="ab" style="left:287.4px;top:792.5px;width:111.8px;height:34.5px;background:#d4d0c8;border-left:1.5px solid #f4f4f4;border-top:1.5px solid #f0f0f0;border-right:1.5px solid #6a6a6a"></div>
<div class="t" style="left:243.30px;width:200px;text-align:center;top:801.95px;font-size:19.200px;color:#000;">F3</div>
<div class="ab" style="left:400.6px;top:792.5px;width:111.8px;height:34.5px;background:#d4d0c8;border-left:1.5px solid #f4f4f4;border-top:1.5px solid #f0f0f0;border-right:1.5px solid #6a6a6a"></div>
<div class="t" style="left:356.50px;width:200px;text-align:center;top:801.95px;font-size:19.200px;color:#000;">F4</div>
<div class="ab" style="left:513.8px;top:792.5px;width:111.8px;height:34.5px;background:#d4d0c8;border-left:1.5px solid #f4f4f4;border-top:1.5px solid #f0f0f0;border-right:1.5px solid #6a6a6a"></div>
<div class="t" style="left:469.70px;width:200px;text-align:center;top:801.95px;font-size:19.200px;color:#000;">F5</div>
<div class="ab" style="left:627.0px;top:792.5px;width:111.8px;height:34.5px;background:#d4d0c8;border-left:1.5px solid #f4f4f4;border-top:1.5px solid #f0f0f0;border-right:1.5px solid #6a6a6a"></div>
<div class="t" style="left:582.90px;width:200px;text-align:center;top:801.95px;font-size:19.200px;color:#000;">F6</div>
<div class="ab" style="left:740.2px;top:792.5px;width:111.8px;height:34.5px;background:#d4d0c8;border-left:1.5px solid #f4f4f4;border-top:1.5px solid #f0f0f0;border-right:1.5px solid #6a6a6a"></div>
<div class="t" style="left:696.10px;width:200px;text-align:center;top:801.95px;font-size:19.200px;color:#000;">F7</div>
<div class="ab" style="left:853.4px;top:792.5px;width:111.8px;height:34.5px;background:#d4d0c8;border-left:1.5px solid #f4f4f4;border-top:1.5px solid #f0f0f0;border-right:1.5px solid #6a6a6a"></div>
<div class="t" style="left:809.30px;width:200px;text-align:center;top:801.95px;font-size:19.200px;color:#000;">F8</div>
<div class="ab" style="left:966.6px;top:792.5px;width:47.9px;height:34.5px;background:#d4d0c8;border-left:1.5px solid #f4f4f4;border-top:1.5px solid #f0f0f0;border-right:1.5px solid #6a6a6a"></div>
<svg style="left:0px;top:0px;" width="1024" height="835" viewBox="0 0 1024 835"><path d="M983.8 807.6 L997.3 813.8 L983.8 820.1Z" fill="#808080"/><ellipse cx="34.5" cy="812.5" rx="12" ry="8" fill="none" stroke="#909090" stroke-width="1"/><path d="M27 818 L21 823 L31 820" fill="#d4d0c8" stroke="#909090" stroke-width="1"/><path d="M36.5 809 L35 815.5 M37 806.5 L37 807.2" stroke="#909090" stroke-width="1.2"/></svg>
</body></html>
